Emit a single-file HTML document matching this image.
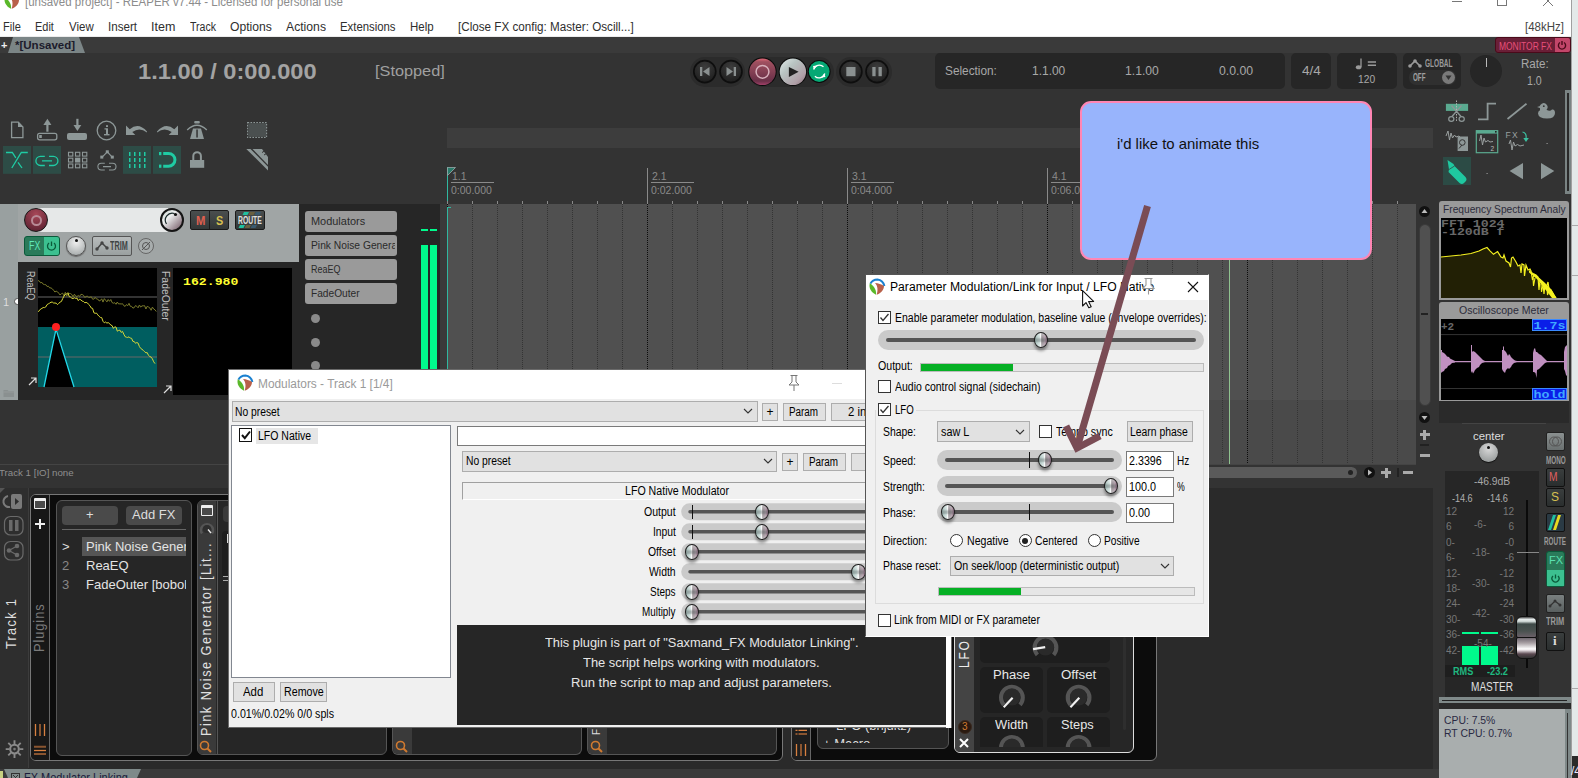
<!DOCTYPE html>
<html><head><meta charset="utf-8">
<style>
*{margin:0;padding:0;box-sizing:border-box}
html,body{width:1578px;height:778px;overflow:hidden;background:#333333;font-family:"Liberation Sans",sans-serif;position:relative}
.a{position:absolute}
.t{position:absolute;white-space:nowrap;line-height:1}
svg{position:absolute;overflow:visible}
.mb .t{font-size:12.5px;color:#2e2e2e;top:21px}
.ic{fill:#8d9797;stroke:none}
.grid{background-image:repeating-linear-gradient(to bottom,#2e2e2e 0 1px,transparent 1px 3px)}
.btnw{position:absolute;background:#e1e1e1;border:1px solid #adadad;font-size:12px;color:#000;text-align:center;line-height:16px}
.wtxt{font-size:12px;color:#000}
</style>
<style>
.thumb{position:absolute;width:14.5px;height:16px;border-radius:50%;border:1px solid #1e1e1e;background:linear-gradient(to bottom,rgba(255,255,255,.35) 0%,rgba(255,255,255,0) 30%,rgba(60,70,70,.3) 45%,rgba(60,70,70,.3) 58%,rgba(255,255,255,0) 70%,rgba(255,255,255,.3) 100%),linear-gradient(to right,#a8c0bc 0%,#d4e2e0 38%,#fafafa 47%,#f0f0f0 51%,#9a9498 55%,#b0a0aa 80%,#a07890 100%);box-shadow:0 3px 3px rgba(0,0,0,.38)}
.cb{position:absolute;width:13px;height:13px;background:#fff;border:1px solid #333}
.cb svg{position:absolute;left:-1px;top:-1px}
.rb{position:absolute;width:13px;height:13px;background:#fff;border:1px solid #333;border-radius:50%}
.wt{font-size:12px;color:#000}
</style>
</head><body>
<!-- right window edge -->
<div class="a" style="left:1571px;top:0;width:7px;height:778px;background:#e4e9e9"></div>
<div class="a" style="left:1571px;top:0;width:1px;height:778px;background:#a0a0a0"></div>

<!-- ===== title + menu ===== -->
<div class="a mb" style="left:0;top:0;width:1571px;height:36.5px;background:#fff">
  <svg style="left:4px;top:-7px" width="16" height="16" viewBox="0 0 16 16"><path d="M1.4 4.6 Q3.5 0.4 8.5 0.4 Q14 0.9 15.4 7" stroke="#1a80d0" stroke-width="2" fill="none"></path><path d="M0.8 4.3 C-0.6 9 2.5 13.6 7 15.8 C7.6 11 5 7 0.8 4.3Z" fill="#5ab82a"></path><path d="M6 4 C9 4.4 12.6 5 15 7 C15 11 11.5 14.6 7.6 15.8 C9 12 9 7 6 4Z" fill="#b8604a"></path></svg>
  <div class="t" style="left: 25px; top: -5px; font-size: 13px; color: rgb(140, 140, 140); --fw: 318px; transform-origin: 0px 50%; transform: scaleX(0.883333);">[unsaved project] - REAPER v7.44 - Licensed for personal use</div>
  <div class="t" style="left: 3px; --fw: 17.7px; transform-origin: 0px 50%; transform: scaleX(0.885);">File</div>
  <div class="t" style="left: 35px; --fw: 19.3px; transform-origin: 0px 50%; transform: scaleX(0.877273);">Edit</div>
  <div class="t" style="left: 69px; --fw: 24.8px; transform-origin: 0px 50%; transform: scaleX(0.918519);">View</div>
  <div class="t" style="left: 108px; --fw: 28.8px; transform-origin: 0px 50%; transform: scaleX(0.929032);">Insert</div>
  <div class="t" style="left: 151px; --fw: 24px; transform-origin: 0px 50%; transform: scaleX(1);">Item</div>
  <div class="t" style="left: 190px; --fw: 26.2px; transform-origin: 0px 50%; transform: scaleX(0.845161);">Track</div>
  <div class="t" style="left: 230px; --fw: 41.8px; transform-origin: 0px 50%; transform: scaleX(0.972093);">Options</div>
  <div class="t" style="left: 286px; --fw: 40px; transform-origin: 0px 50%; transform: scaleX(0.97561);">Actions</div>
  <div class="t" style="left: 340px; --fw: 55.4px; transform-origin: 0px 50%; transform: scaleX(0.908197);">Extensions</div>
  <div class="t" style="left: 410px; --fw: 23.9px; transform-origin: 0px 50%; transform: scaleX(0.919231);">Help</div>
  <div class="t" style="left: 458px; --fw: 175.4px; transform-origin: 0px 50%; transform: scaleX(0.932979);">[Close FX config: Master: Oscill...]</div>
  <div class="t" style="left: 1524.5px; color: rgb(68, 68, 68); --fw: 38.5px; transform-origin: 0px 50%; transform: scaleX(0.916667);">[48kHz]</div>
  <div class="a" style="left:1452px;top:1px;width:10px;height:1px;background:#777"></div>
  <div class="a" style="left:1497px;top:-3px;width:10px;height:9px;border:1px solid #777"></div>
  <svg style="left:1542px;top:-5px" width="12" height="12"><path d="M1 11 L11 1 M1 1 L11 11" stroke="#777" stroke-width="1" fill="none"></path></svg>
</div>
<div class="a" style="left:0;top:36px;width:1571px;height:1px;background:#ececec"></div>

<!-- ===== tab row ===== -->
<div class="a" style="left:0;top:37px;width:1571px;height:16px;background:#3a3a3a"></div>
<div class="t" style="left:1px;top:40px;font-size:11px;color:#eee;font-weight:bold">+</div>
<svg style="left:8px;top:37px" width="80" height="16"><path d="M5 0 L71 0 L77 16 L0 16Z" fill="#7b8586"></path></svg>
<div class="t" style="left:15px;top:40px;font-size:11.5px;color:#1b1b2b;font-weight:bold">*[Unsaved]</div>
<!-- Monitor FX -->
<div class="a" style="left:1495px;top:37px;width:76px;height:16px;background:#6a1f37;border:1px solid #4a0a1a;border-radius:3px"></div>
<div class="a" style="left:1555px;top:38px;width:15px;height:14px;background:#c2466a;border-radius:0 2px 2px 0"></div>
<div class="t" style="left: 1499px; top: 40.5px; font-size: 11px; color: rgb(232, 80, 122); --fw: 53px; transform-origin: 0px 50%; transform: scaleX(0.768116);">MONITOR FX</div>
<svg style="left:1557px;top:40px" width="10" height="10"><path d="M3 2.5 A3.6 3.6 0 1 0 7 2.5" stroke="#4a0a1a" stroke-width="1.4" fill="none"></path><path d="M5 1 L5 5" stroke="#4a0a1a" stroke-width="1.4"></path></svg>

<!-- ===== transport ===== -->
<div class="t" style="left: 137.5px; top: 62px; font-size: 21.5px; font-weight: bold; color: rgb(163, 163, 163); --fw: 179px; transform-origin: 0px 50%; transform: scaleX(1.09816);">1.1.00 / 0:00.000</div>
<div class="t" style="left: 375px; top: 63px; font-size: 15.5px; color: rgb(160, 160, 160); --fw: 69.4px; transform-origin: 0px 50%; transform: scaleX(1.05152);">[Stopped]</div>
<div class="a" style="left:690px;top:57px;width:55px;height:30px;background:#2b2b2b;border-radius:15px"></div>
<div class="a" style="left:748px;top:57px;width:86px;height:30px;background:#2b2b2b;border-radius:15px"></div>
<div class="a" style="left:836px;top:57px;width:56px;height:30px;background:#2b2b2b;border-radius:15px"></div>
<svg style="left:680px;top:50px" width="220" height="45">
 <defs>
  <radialGradient id="gdk" cx="50%" cy="30%" r="70%"><stop offset="0" stop-color="#3c3c3c"></stop><stop offset="1" stop-color="#1e1e1e"></stop></radialGradient>
  <linearGradient id="grec" x1="0" y1="0" x2="0" y2="1"><stop offset="0" stop-color="#e06878"></stop><stop offset=".12" stop-color="#a05060"></stop><stop offset=".85" stop-color="#6a3048"></stop><stop offset="1" stop-color="#a04068"></stop></linearGradient>
  <linearGradient id="gply" x1="0" y1="0" x2="1" y2="1"><stop offset="0" stop-color="#e4ecec"></stop><stop offset=".35" stop-color="#b8c4c2"></stop><stop offset=".75" stop-color="#b0a0a8"></stop><stop offset="1" stop-color="#8a7078"></stop></linearGradient>
 </defs>
 <g stroke="#0e0e0e" stroke-width="1.6">
  <circle cx="24.8" cy="21.6" r="11" fill="url(#gdk)"></circle>
  <circle cx="51" cy="21.6" r="11" fill="url(#gdk)"></circle>
  <circle cx="170.9" cy="21.6" r="11" fill="url(#gdk)"></circle>
  <circle cx="197" cy="21.6" r="11" fill="url(#gdk)"></circle>
 </g>
 <path d="M20 17 H22.3 V26 H20Z M29.5 17 L23 21.5 L29.5 26Z" fill="#8a9090"></path>
 <path d="M56 17 H53.7 V26 H56Z M46.5 17 L53 21.5 L46.5 26Z" fill="#8a9090"></path>
 <rect x="166.3" y="17" width="9.2" height="9.2" fill="#8a9090"></rect>
 <rect x="192.3" y="17" width="3.3" height="9.2" fill="#8a9090"></rect><rect x="198.5" y="17" width="3.3" height="9.2" fill="#8a9090"></rect>
 <circle cx="82.5" cy="21.8" r="14.2" fill="#0a0a0a"></circle>
 <circle cx="82.5" cy="21.8" r="13.2" fill="url(#grec)"></circle>
 <circle cx="82.5" cy="21.8" r="6.4" fill="none" stroke="#d8b0bc" stroke-width="1.5"></circle>
 <circle cx="112.9" cy="21.8" r="14.2" fill="#0a0a0a"></circle>
 <circle cx="112.9" cy="21.8" r="13.2" fill="url(#gply)"></circle>
 <path d="M108.9 17 L118.6 21.8 L108.9 27Z" fill="#222"></path>
 <circle cx="139.2" cy="21.5" r="11.4" fill="#0a0a0a"></circle>
 <circle cx="139.2" cy="21.5" r="10.4" fill="#05a874"></circle>
 <path d="M133.6 19.5 A6 6 0 0 1 143.5 16.8 M144.8 23.5 A6 6 0 0 1 134.9 26.2" stroke="#fff" stroke-width="1.3" fill="none"></path>
 <path d="M133 16 L137.5 15.5 L134 19.5Z M145.4 27 L140.9 27.5 L144.4 23.5Z" fill="#fff"></path>
</svg>
<!-- selection etc -->
<div class="a" style="left:935px;top:53px;width:350px;height:36px;background:#262626;border-radius:5px"></div>
<div class="t" style="left: 945px; top: 65px; font-size: 12.5px; color: rgb(168, 168, 168); --fw: 52px; transform-origin: 0px 50%; transform: scaleX(0.945455);">Selection:</div>
<div class="t" style="left: 1032.4px; top: 65px; font-size: 12.5px; color: rgb(168, 168, 168); --fw: 33.5px; transform-origin: 0px 50%; transform: scaleX(0.957143);">1.1.00</div>
<div class="t" style="left: 1125.1px; top: 65px; font-size: 12.5px; color: rgb(168, 168, 168); --fw: 34px; transform-origin: 0px 50%; transform: scaleX(0.971429);">1.1.00</div>
<div class="t" style="left: 1219px; top: 65px; font-size: 12.5px; color: rgb(168, 168, 168); --fw: 34.3px; transform-origin: 0px 50%; transform: scaleX(0.98);">0.0.00</div>
<div class="a" style="left:1291px;top:53px;width:40px;height:36px;background:#262626;border-radius:5px"></div>
<div class="t" style="left: 1301.5px; top: 65px; font-size: 12.5px; color: rgb(168, 168, 168); --fw: 18.4px; transform-origin: 0px 50%; transform: scaleX(1.08235);">4/4</div>
<div class="a" style="left:1337px;top:53px;width:60px;height:36px;background:#262626;border-radius:5px"></div>
<svg style="left:1355px;top:57px" width="28" height="14"><path d="M6 1.5 V10" stroke="#9a9a9a" stroke-width="1.3"></path><ellipse cx="3.6" cy="10.2" rx="2.8" ry="2" fill="#9a9a9a"></ellipse><path d="M12.8 5 H21 M12.8 8.3 H21" stroke="#9a9a9a" stroke-width="1.4"></path></svg>
<div class="t" style="left: 1358.4px; top: 73.5px; font-size: 10.5px; color: rgb(168, 168, 168); --fw: 17.6px; transform-origin: 0px 50%; transform: scaleX(0.977778);">120</div>
<div class="a" style="left:1403px;top:53px;width:58px;height:36px;background:#262626;border-radius:5px"></div>
<svg style="left:1408px;top:58px" width="14" height="11"><path d="M2 8 L7 3 L12 8" stroke="#9a9a9a" stroke-width="1.6" fill="none"></path><circle cx="2" cy="8" r="1.8" fill="#9a9a9a"></circle><circle cx="7" cy="3" r="1.8" fill="#9a9a9a"></circle><circle cx="12" cy="8" r="1.8" fill="#9a9a9a"></circle></svg>
<div class="t" style="left: 1424.6px; top: 58.5px; font-size: 10px; font-weight: bold; color: rgb(154, 154, 154); --fw: 27.4px; transform-origin: 0px 50%; transform: scaleX(0.652381);">GLOBAL</div>
<div class="a" style="left:1409px;top:70px;width:47px;height:14.5px;background:#303030;border-radius:7px"></div>
<div class="t" style="left: 1413.4px; top: 72.2px; font-size: 10.5px; font-weight: bold; color: rgb(160, 160, 160); --fw: 12.5px; transform-origin: 0px 50%; transform: scaleX(0.595238);">OFF</div>
<div class="a" style="left:1442.3px;top:70.8px;width:13px;height:13px;border-radius:50%;background:#7a7a7a"></div>
<svg style="left:1442.3px;top:70.8px" width="13" height="13"><path d="M3.5 4.5 L9.5 4.5 L6.5 9Z" fill="#333"></path></svg>
<div class="a" style="left:1470px;top:55px;width:32px;height:32px;border-radius:50%;background:#262626"></div>
<div class="a" style="left:1486px;top:58px;width:1px;height:9px;background:#bbb"></div>
<div class="t" style="left: 1521px; top: 58px; font-size: 12px; color: rgb(168, 168, 168); --fw: 28px; transform-origin: 0px 50%; transform: scaleX(0.965517);">Rate:</div>
<div class="t" style="left: 1527px; top: 74.5px; font-size: 12px; color: rgb(168, 168, 168); --fw: 15px; transform-origin: 0px 50%; transform: scaleX(0.882353);">1.0</div>

<!-- ===== toolbar icons ===== -->
<svg style="left:0;top:0" width="280" height="180">
 <g fill="none" stroke="#8d9797" stroke-width="1.3">
  <path d="M11.6 122.1 H18.3 L22.9 127 V137.6 H11.6Z"></path>
  <rect x="37.6" y="133.4" width="19.2" height="6.4" rx="2"></rect>
  <circle cx="106.5" cy="130.5" r="9.3"></circle>
  <rect x="247.6" y="122.6" width="19" height="14.8" stroke-dasharray="1.6 1.3" stroke-width="1.1"></rect>
 </g>
 <g fill="#8d9797">
  <path d="M18 122 L23 127 H18Z"></path>
  <rect x="46.3" y="123.5" width="2.2" height="8.2"></rect><path d="M43.4 125 L47.4 118.7 L51.4 125Z"></path>
  <rect x="39.2" y="135" width="2.6" height="3"></rect>
  <rect x="76.3" y="118.8" width="2.2" height="8"></rect><path d="M73.5 125 L77.4 131 L81.3 125Z"></path>
  <rect x="67" y="133" width="20" height="7" rx="2"></rect>
  <rect x="106" y="128.3" width="2" height="6.2"></rect><rect x="104" y="134" width="5.5" height="1.4"></rect><rect x="104.5" y="128.3" width="2" height="1.2"></rect><rect x="106" y="125.2" width="2" height="1.8"></rect>
  <path d="M126 125.6 V135.1 H135.3 L132.3 132.1 Q139.5 126.8 146.9 132.4 L147 131.6 Q138.5 121.8 129.7 129.3Z"></path>
  <path d="M178 125.6 V135.1 H168.7 L171.7 132.1 Q164.5 126.8 157.1 132.4 L157 131.6 Q165.5 121.8 174.3 129.3Z"></path>
  <path d="M190 139.1 L193 128.5 H201 L204 139.1Z"></path>
  <rect x="194.2" y="121" width="5.6" height="2.6" rx="1"></rect>
 </g>
 <rect x="196.3" y="129.5" width="1.5" height="8" fill="#333"></rect>
 <path d="M187.2 130 Q197 120.5 206.8 130" stroke="#8d9797" stroke-width="1.3" fill="none"></path>
 <rect x="248.2" y="123.2" width="17.8" height="13.6" fill="#4b5050"></rect>
 <!-- row 2 -->
 <rect x="3" y="146" width="28" height="27.8" fill="#2d4c46"></rect>
 <rect x="33" y="146" width="28" height="27.8" fill="#2d4c46"></rect>
 <rect x="123" y="146" width="28" height="27.8" fill="#2d4c46"></rect>
 <rect x="153" y="146" width="28" height="27.8" fill="#2d4c46"></rect>
 <g fill="none" stroke="#1fcca4" stroke-width="1.3">
  <path d="M6 152.5 H12.3 L15.8 157.8 M27.8 152.5 H21.3 L11.8 168 M18 162.3 L22 168"></path>
  <path d="M44.8 156.3 H40.5 A4.6 4.6 0 0 0 40.5 165.5 H44.8 M49 156.3 H53.3 A4.6 4.6 0 0 1 53.3 165.5 H49 M42 160.9 H52"></path>
 </g>
 <g fill="#1fcca4">
  <rect x="129" y="152" width="1.5" height="4"></rect><rect x="134" y="152" width="1.5" height="4"></rect><rect x="139" y="152" width="1.5" height="4"></rect><rect x="144" y="152" width="1.5" height="4"></rect>
  <rect x="129" y="158" width="1.5" height="4"></rect><rect x="134" y="158" width="1.5" height="4"></rect><rect x="139" y="158" width="1.5" height="4"></rect><rect x="144" y="158" width="1.5" height="4"></rect>
  <rect x="129" y="164" width="1.5" height="4"></rect><rect x="134" y="164" width="1.5" height="4"></rect><rect x="139" y="164" width="1.5" height="4"></rect><rect x="144" y="164" width="1.5" height="4"></rect>
  <rect x="159" y="152" width="2.4" height="3.2"></rect><rect x="159" y="164.6" width="2.4" height="3.2"></rect>
 </g>
 <path d="M163.2 153.4 H168.5 A6.45 6.45 0 0 1 168.5 166.3 H163.2" stroke="#1fcca4" stroke-width="3" fill="none"></path>
 <g fill="none" stroke="#8d9797" stroke-width="1.1">
  <rect x="68.5" y="152.3" width="4.3" height="3.8"></rect><rect x="75.5" y="152.3" width="4.3" height="3.8"></rect><rect x="82.5" y="152.3" width="4.3" height="3.8"></rect>
  <rect x="68.5" y="158.2" width="4.3" height="3.8"></rect><rect x="82.5" y="158.2" width="4.3" height="3.8"></rect>
  <rect x="68.5" y="164" width="4.3" height="3.8"></rect><rect x="75.5" y="164" width="4.3" height="3.8"></rect><rect x="82.5" y="164" width="4.3" height="3.8"></rect>
  <path d="M102.2 157.2 L107.3 151.8 L112.2 157.2"></path>
  <path d="M104.8 163.2 H101.3 A3.4 3.4 0 0 0 101.3 170 H104.8 M109 163.2 H112.6 A3.4 3.4 0 0 1 112.6 170 H109 M103 166.6 H111"></path>
 </g>
 <rect x="75" y="157.7" width="5.3" height="4.8" fill="#8d9797"></rect>
 <g fill="#8d9797"><rect x="100.3" y="155.6" width="3" height="3"></rect><rect x="105.8" y="150.3" width="3" height="3"></rect><rect x="110.8" y="155.6" width="3" height="3"></rect>
  <rect x="190" y="160" width="14.2" height="7.8"></rect></g>
 <path d="M193.3 160.5 V156 A3.8 3.8 0 0 1 200.9 156 V160.5" stroke="#8d9797" stroke-width="2" fill="none"></path>
 <path d="M246.3 149 H262 L268 157 V170.4Z" fill="#8d9797"></path>
 <path d="M250.5 149 L268 166.8 V165 L252.5 149Z" fill="#333"></path>
 <path d="M262 152.5 L264.5 151 M264 155 L266.5 153.5" stroke="#333" stroke-width="1"></path>
</svg>

<!-- ===== timeline ===== -->
<div class="a" style="left:447px;top:128px;width:986px;height:20px;background:#3d3d3d"></div>
<!-- ruler markers -->
<div class="a" style="left:447px;top:167px;width:1.4px;height:37px;background:#30b8a0"></div>
<svg style="left:447px;top:167px" width="12" height="12"><path d="M0.5 0.5 H8.5 L0.5 8.5Z" fill="#2a7a6a" stroke="#9aa" stroke-width="0.8"></path></svg>
<div class="t" style="left:452px;top:171px;font-size:10.5px;color:#8a8a8a">1.1</div>
<div class="a" style="left:451px;top:182px;width:43px;height:1px;background:#8a8a8a"></div>
<div class="t" style="left:451px;top:185px;font-size:10.5px;color:#8a8a8a">0:00.000</div>
<div class="a" style="left:647px;top:168px;width:1px;height:36px;background:#8a8a8a"></div>
<div class="t" style="left:652px;top:171px;font-size:10.5px;color:#8a8a8a">2.1</div>
<div class="a" style="left:651px;top:182px;width:43px;height:1px;background:#8a8a8a"></div>
<div class="t" style="left:651px;top:185px;font-size:10.5px;color:#8a8a8a">0:02.000</div>
<div class="a" style="left:847px;top:168px;width:1px;height:36px;background:#8a8a8a"></div>
<div class="t" style="left:852px;top:171px;font-size:10.5px;color:#8a8a8a">3.1</div>
<div class="a" style="left:851px;top:182px;width:43px;height:1px;background:#8a8a8a"></div>
<div class="t" style="left:851px;top:185px;font-size:10.5px;color:#8a8a8a">0:04.000</div>
<div class="a" style="left:1047px;top:168px;width:1px;height:36px;background:#8a8a8a"></div>
<div class="t" style="left:1052px;top:171px;font-size:10.5px;color:#8a8a8a">4.1</div>
<div class="a" style="left:1051px;top:182px;width:43px;height:1px;background:#8a8a8a"></div>
<div class="t" style="left:1051px;top:185px;font-size:10.5px;color:#8a8a8a">0:06.000</div>
<!-- track lane -->
<div class="a" style="left:440px;top:204px;width:7px;height:260px;background:#3a3a3a"></div>
<svg style="left:447px;top:200px" width="969" height="264">
 <defs>
  <pattern id="pmin" x="0" y="0" width="25" height="2" patternUnits="userSpaceOnUse"><rect x="0" y="0" width="1" height="1" fill="#343434"></rect></pattern>
  <pattern id="pmaj" x="0" y="0" width="200" height="2" patternUnits="userSpaceOnUse"><rect x="0" y="0" width="1" height="1" fill="#0c0c0c"></rect></pattern>
  <pattern id="ptk" x="0" y="0" width="25" height="4" patternUnits="userSpaceOnUse"><rect x="0" y="1" width="1" height="3" fill="#8a8a8a"></rect></pattern>
 </defs>
 <rect x="0" y="0" width="969" height="4" fill="url(#ptk)"></rect>
 <rect x="0" y="4" width="969" height="196" fill="#505050"></rect>
 <rect x="0" y="200" width="969" height="64" fill="#4a4a4a"></rect>
 <rect x="0" y="4" width="969" height="260" fill="url(#pmin)"></rect>
 <rect x="0" y="4" width="969" height="260" fill="url(#pmaj)"></rect>
</svg>
<div class="a" style="left:447px;top:207px;width:1.4px;height:257px;background:#30b8a0"></div>
<div class="a" style="left:447px;top:207px;width:4px;height:1.4px;background:#30b8a0"></div>
<div class="a" style="left:1229px;top:204px;width:1px;height:260px;background:#8fc28f"></div>
<!-- v scrollbar -->
<div class="a" style="left:1416px;top:204px;width:17px;height:260px;background:#333"></div>
<div class="a" style="left:1419px;top:206.3px;width:11px;height:11px;border-radius:50%;background:#111"></div>
<svg style="left:1419px;top:206.3px" width="11" height="11"><path d="M2.5 7 L8.5 7 L5.5 3Z" fill="#bbb"></path></svg>
<div class="a" style="left:1418.5px;top:224px;width:12px;height:181.5px;background:#505050;border:1px solid #3a3a3a;border-radius:6px"></div>
<div class="a" style="left:1421px;top:313px;width:7px;height:2px;background:#222"></div>
<div class="a" style="left:1419px;top:412px;width:11px;height:11px;border-radius:50%;background:#111"></div>
<svg style="left:1419px;top:412px" width="11" height="11"><path d="M2.5 4 L8.5 4 L5.5 8Z" fill="#bbb"></path></svg>
<div class="a" style="left:1419.5px;top:433px;width:10px;height:3px;background:#aaa"></div><div class="a" style="left:1423px;top:429.5px;width:3px;height:10px;background:#aaa"></div>
<div class="a" style="left:1420px;top:444px;width:9px;height:1.5px;background:#222"></div>
<div class="a" style="left:1420px;top:453.5px;width:9.5px;height:3px;background:#aaa"></div>
<!-- h scrollbar -->
<div class="a" style="left:447px;top:467px;width:910px;height:11px;background:#5a5a5a;border-radius:6px"></div>
<div class="a" style="left:1348px;top:470px;width:5px;height:5px;border-radius:50%;background:#222"></div>
<div class="a" style="left:1364px;top:467px;width:11px;height:11px;border-radius:50%;background:#111"></div>
<svg style="left:1364px;top:467px" width="11" height="11"><path d="M4 2.5 L8 5.5 L4 8.5Z" fill="#bbb"></path></svg>
<div class="a" style="left:1381px;top:471px;width:10px;height:3px;background:#aaa"></div><div class="a" style="left:1384.5px;top:467.5px;width:3px;height:10px;background:#aaa"></div>
<div class="a" style="left:1397px;top:468px;width:1.5px;height:9px;background:#222"></div>
<div class="a" style="left:1403px;top:471px;width:9.5px;height:3px;background:#aaa"></div>

<!-- ===== track header ===== -->
<div class="a" style="left:0;top:204px;width:18px;height:196px;background:#99a0a0"></div>
<div class="t" style="left:3px;top:297px;font-size:11px;color:#ddd">1</div>
<div class="a" style="left:14px;top:298px;width:7px;height:7px;border-radius:50%;background:#fff;border:1px solid #555"></div>
<svg style="left:3px;top:388px" width="12" height="10"><path d="M0.5 2 H4.5 L5.5 3 H11 V9 H0.5Z" fill="#8a9090"></path><path d="M0.5 4 H11" stroke="#9aa0a0" stroke-width="0.8"></path></svg>
<div class="a" style="left:18px;top:204px;width:281px;height:58px;background:#a0a5a5"></div>
<div class="a" style="left:38px;top:208px;width:130px;height:24px;background:#e6e8e8"></div>
<div class="a" style="left:24px;top:208px;width:24px;height:24px;border-radius:50%;background:radial-gradient(circle at 50% 25%,#a84858,#5e2232 85%);border:1.5px solid #1a1a1a"></div>
<div class="a" style="left:30.5px;top:214.5px;width:11px;height:11px;border-radius:50%;border:2px solid #b88a96"></div>
<div class="a" style="left:160px;top:208px;width:24px;height:24px;border-radius:50%;background:linear-gradient(135deg,#c8d4d0 0%,#eef0f0 35%,#a09098 75%,#705860 100%);border:2px solid #151515"></div>
<svg style="left:160px;top:208px" width="24" height="24"><path d="M6.5 16 A7 7 0 0 1 14.5 5.5" stroke="#1a2a2a" stroke-width="1.2" fill="none"></path><circle cx="15.5" cy="6.5" r="1.6" fill="#111"></circle></svg>
<div class="a" style="left:190px;top:210px;width:39px;height:20px;background:linear-gradient(#4a4e4e,#333838);border:1px solid #1a1a1a;border-radius:2px"></div>
<div class="a" style="left:209px;top:210px;width:1px;height:20px;background:#1a1a1a"></div>
<div class="t" style="left: 195.5px; top: 213.5px; font-size: 13px; font-weight: bold; color: rgb(224, 96, 80); --fw: 9.5px; transform-origin: 0px 50%; transform: scaleX(0.863636);">M</div>
<div class="t" style="left: 215.5px; top: 213.5px; font-size: 13px; font-weight: bold; color: rgb(216, 192, 80); --fw: 7.5px; transform-origin: 0px 50%; transform: scaleX(0.833333);">S</div>
<div class="a" style="left:235px;top:210px;width:30px;height:20px;background:linear-gradient(#4a4e4e,#333838);border:1px solid #1a1a1a;border-radius:2px"></div>
<svg style="left:235px;top:210px" width="30" height="20"><path d="M9 2 H14 L12.5 5 H7.5Z" fill="#20c0a0"></path><path d="M15 2 H20 L18.5 5 H13.5Z" fill="#6a6040"></path><path d="M21 2 H26 L24.5 5 H19.5Z" fill="#3a5a70"></path><path d="M5 15 H10 L8.5 18 H3.5Z" fill="#20c0a0"></path><path d="M11 15 H16 L14.5 18 H9.5Z" fill="#6a6040"></path><path d="M17 15 H22 L20.5 18 H15.5Z" fill="#3a5a70"></path></svg>
<div class="t" style="left: 238px; top: 214.5px; font-size: 11px; font-weight: bold; color: rgb(224, 224, 224); --fw: 24px; transform-origin: 0px 50%; transform: scaleX(0.615385);">ROUTE</div>
<!-- row 2 -->
<div class="a" style="left:24px;top:236px;width:36px;height:20px;background:#2a7a5a;border:1px solid #0a5a3a;border-radius:3px"></div>
<div class="a" style="left:44px;top:237px;width:15px;height:18px;background:#3cc090;border-radius:0 2px 2px 0"></div>
<div class="t" style="left: 28.5px; top: 240px; font-size: 12px; color: rgb(96, 232, 184); --fw: 11px; transform-origin: 0px 50%; transform: scaleX(0.733333);">FX</div>
<svg style="left:44px;top:237px" width="15" height="18"><path d="M5 6 A4 4 0 1 0 10 6" stroke="#0a5a3a" stroke-width="1.3" fill="none"></path><path d="M7.5 4.5 V9" stroke="#0a5a3a" stroke-width="1.3"></path></svg>
<div class="a" style="left:66px;top:236px;width:20px;height:20px;border-radius:50%;background:radial-gradient(circle at 50% 30%,#f0f0f0,#9aa0a0);border:1px solid #555;box-shadow:0 1px 1px #666"></div>
<div class="a" style="left:75px;top:239px;width:3px;height:3px;border-radius:50%;background:#111"></div>
<div class="a" style="left:92px;top:236px;width:40px;height:20px;background:linear-gradient(#b8bcbc,#9aa0a0);border:1px solid #555;border-radius:2px"></div>
<svg style="left:95px;top:240px" width="16" height="12"><path d="M2 9 L7 3 L12 8" stroke="#444" stroke-width="1.5" fill="none"></path><circle cx="2" cy="9" r="1.7" fill="#444"></circle><circle cx="7" cy="3" r="1.7" fill="#444"></circle><circle cx="12" cy="8" r="1.7" fill="#444"></circle></svg>
<div class="t" style="left: 109.5px; top: 240px; font-size: 12px; font-weight: bold; color: rgb(64, 68, 68); --fw: 17.5px; transform-origin: 0px 50%; transform: scaleX(0.603448);">TRIM</div>
<div class="a" style="left:138px;top:238px;width:16px;height:16px;border-radius:50%;border:1px solid #666;background:#a8adad"></div>
<svg style="left:138px;top:238px" width="16" height="16"><circle cx="8" cy="8" r="3.5" stroke="#555" stroke-width="1" fill="none"></circle><path d="M4 12 L12 4" stroke="#555" stroke-width="1"></path></svg>
<!-- fx displays -->
<div class="a" style="left:18px;top:262px;width:281px;height:138px;background:#262626"></div>
<div class="t" style="left: 36px; top: 271px; font-size: 11.5px; color: rgb(192, 192, 192); transform: rotate(90deg) scaleX(0.776316); transform-origin: 0px 0px; --rt: rotate(90deg); --fw: 29.5px;">ReaEQ</div>
<div class="a" style="left:38px;top:268px;width:119px;height:119px;background:#000"></div>
<svg style="left:38px;top:268px" width="119" height="119" viewBox="0 0 119 119">
 <rect x="0" y="59" width="119" height="60" fill="#005e60"></rect>
 <path d="M0 29 H119 M0 89 H119" stroke="#666" stroke-width="1"></path>
 <path d="M6 119 L18 59 L36 119Z" fill="#000"></path>
 <path d="M6 119 L18 61 L36 119" stroke="#22d8e8" stroke-width="1.3" fill="none"></path>
 <circle cx="18" cy="59" r="4" fill="#ff2020"></circle>
 <path d="M0.0 12.6 L1.3 13.0 L2.6 14.9 L3.9 14.4 L5.2 16.2 L6.5 16.6 L7.8 16.7 L9.1 18.5 L10.4 18.2 L11.7 19.9 L13.0 19.9 L14.3 20.8 L15.6 22.3 L16.9 24.0 L18.2 23.2 L19.5 23.8 L20.8 25.3 L22.1 27.0 L23.4 25.7 L24.7 25.2 L26.0 28.1 L27.3 24.3 L28.6 28.2 L29.9 26.0 L31.2 25.6 L32.5 25.6 L33.8 26.5 L35.1 28.9 L36.4 26.2 L37.7 28.1 L39.0 28.5 L40.3 27.5 L41.6 28.4 L42.9 26.4 L44.2 26.5 L45.5 27.3 L46.8 29.5 L48.1 28.5 L49.4 28.1 L50.7 29.5 L52.0 29.2 L53.3 28.8 L54.6 31.2 L55.9 31.1 L57.2 29.3 L58.5 31.0 L59.8 31.1 L61.1 32.9 L62.4 32.5 L63.7 30.8 L65.0 34.1 L66.3 30.6 L67.6 32.2 L68.9 33.9 L70.2 31.5 L71.5 33.3 L72.8 31.5 L74.1 34.6 L75.4 35.2 L76.7 34.7 L78.0 36.3 L79.3 34.0 L80.6 36.0 L81.9 35.8 L83.2 36.0 L84.5 35.7 L85.8 37.7 L87.1 38.4 L88.4 36.6 L89.7 37.7 L91.0 35.3 L92.3 38.3 L93.6 38.4 L94.9 40.1 L96.2 39.7 L97.5 37.6 L98.8 38.3 L100.1 39.8 L101.4 37.0 L102.7 39.1 L104.0 37.9 L105.3 37.8 L106.6 37.7 L107.9 41.0 L109.2 38.3 L110.5 39.0 L111.8 39.9 L113.1 42.3 L114.4 39.1 L115.7 41.0 L117.0 41.8 L118.3 43.5" stroke="#7a7a2c" stroke-width="1" fill="none"></path>
 <path d="M0.0 43.6 L1.3 42.8 L2.6 41.0 L3.9 40.4 L5.2 39.5 L6.5 39.6 L7.8 38.9 L9.1 36.6 L10.4 35.8 L11.7 35.1 L13.0 34.2 L14.3 34.1 L15.6 35.0 L16.9 35.0 L18.2 35.2 L19.5 36.6 L20.8 35.3 L22.1 34.1 L23.4 33.5 L24.7 30.6 L26.0 28.1 L27.3 26.5 L28.6 26.0 L29.9 24.7 L31.2 28.6 L32.5 29.0 L33.8 30.2 L35.1 30.6 L36.4 29.8 L37.7 30.5 L39.0 30.1 L40.3 32.6 L41.6 31.2 L42.9 31.9 L44.2 33.1 L45.5 33.5 L46.8 34.8 L48.1 34.4 L49.4 34.9 L50.7 36.5 L52.0 37.8 L53.3 40.1 L54.6 40.4 L55.9 44.8 L57.2 45.3 L58.5 45.1 L59.8 46.9 L61.1 48.3 L62.4 49.4 L63.7 49.6 L65.0 53.3 L66.3 54.8 L67.6 54.0 L68.9 55.1 L70.2 54.6 L71.5 55.5 L72.8 57.1 L74.1 57.6 L75.4 60.4 L76.7 58.8 L78.0 59.1 L79.3 63.2 L80.6 62.5 L81.9 62.1 L83.2 64.4 L84.5 63.4 L85.8 66.2 L87.1 68.7 L88.4 69.2 L89.7 69.5 L91.0 68.8 L92.3 70.1 L93.6 70.3 L94.9 73.4 L96.2 73.5 L97.5 75.3 L98.8 74.5 L100.1 75.1 L101.4 78.5 L102.7 80.4 L104.0 81.3 L105.3 82.4 L106.6 83.7 L107.9 84.8 L109.2 84.6 L110.5 87.4 L111.8 88.5 L113.1 89.1 L114.4 90.9 L115.7 93.8 L117.0 95.6" stroke="#d8d838" stroke-width="1" fill="none"></path>
</svg>
<svg style="left:27.5px;top:375.5px" width="10" height="10"><path d="M1 9 L8 2 M3 2 H8 V7" stroke="#ddd" stroke-width="1.2" fill="none"></path></svg>
<div class="t" style="left: 171px; top: 271px; font-size: 11.5px; color: rgb(192, 192, 192); transform: rotate(90deg) scaleX(0.903636); transform-origin: 0px 0px; --rt: rotate(90deg); --fw: 49.7px;">FadeOuter</div>
<div class="a" style="left:173px;top:268px;width:119px;height:127px;background:#000"></div>
<div class="t" style="left: 183px; top: 276px; font-size: 11.5px; font-family: &quot;Liberation Mono&quot;, monospace; font-weight: bold; color: rgb(255, 255, 48); --fw: 55px; transform-origin: 0px 50%; transform: scaleX(1.14583);">162.980</div>
<svg style="left:163px;top:384px" width="10" height="10"><path d="M1 9 L8 2 M3 2 H8 V7" stroke="#ddd" stroke-width="1.2" fill="none"></path></svg>
<!-- fx buttons -->
<div class="a" style="left:299px;top:204px;width:141px;height:196px;background:#262626"></div>
<div class="a" style="left:305px;top:211px;width:92px;height:21px;background:#9a9a9a;border-radius:3px"></div>
<div class="a" style="left:305px;top:235px;width:92px;height:21px;background:#9a9a9a;border-radius:3px"></div>
<div class="a" style="left:305px;top:259px;width:92px;height:21px;background:#9a9a9a;border-radius:3px"></div>
<div class="a" style="left:305px;top:283px;width:92px;height:21px;background:#9a9a9a;border-radius:3px"></div>
<div class="t" style="left: 310.7px; top: 215.5px; font-size: 11px; color: rgb(42, 42, 42); --fw: 53.7px; transform-origin: 0px 50%; transform: scaleX(0.994444);">Modulators</div>
<div class="a" style="left:310.7px;top:239px;width:84px;height:14px;overflow:hidden"><div class="t" style="left: 0px; top: 0.8px; font-size: 11px; color: rgb(42, 42, 42); --fw: 98px; transform-origin: 0px 50%; transform: scaleX(0.933333);">Pink Noise Generator</div></div>
<div class="t" style="left: 310.7px; top: 263.8px; font-size: 11px; color: rgb(42, 42, 42); --fw: 29.4px; transform-origin: 0px 50%; transform: scaleX(0.816667);">ReaEQ</div>
<div class="t" style="left: 310.7px; top: 287.7px; font-size: 11px; color: rgb(42, 42, 42); --fw: 49px; transform-origin: 0px 50%; transform: scaleX(0.924528);">FadeOuter</div>
<div class="a" style="left:311px;top:314px;width:9px;height:9px;border-radius:50%;background:#8a8a8a"></div>
<div class="a" style="left:311px;top:338px;width:9px;height:9px;border-radius:50%;background:#8a8a8a"></div>
<div class="a" style="left:311px;top:361px;width:9px;height:9px;border-radius:50%;background:#8a8a8a"></div>
<!-- meter -->
<div class="a" style="left:421px;top:229px;width:7px;height:2px;background:#00fa8c"></div>
<div class="a" style="left:430px;top:229px;width:7px;height:2px;background:#00fa8c"></div>
<div class="a" style="left:421px;top:245px;width:7px;height:155px;background:#00fa8c"></div>
<div class="a" style="left:430px;top:245px;width:7px;height:155px;background:#00fa8c"></div>

<!-- lower dark -->
<div class="a" style="left:0;top:464px;width:1416px;height:1px;background:#444"></div>
<div class="t" style="left: -1px; top: 467.8px; font-size: 9.5px; color: rgb(143, 143, 143); --fw: 74.6px; transform-origin: 0px 50%; transform: scaleX(1.02192);">Track 1 [IO] none</div>

<!-- ===== mixer ===== -->
<div class="a" style="left:0;top:488px;width:1434px;height:281px;background:#2a2a2a"></div>
<div class="a" style="left:0;top:488px;width:28px;height:281px;background:#2e2e2e"></div>
<div class="a" style="left:28px;top:488px;width:1px;height:280px;background:#3c3c3c"></div>
<svg style="left:0;top:488px" width="28" height="275">
 <path d="M0 0 L5 0 L0 5Z" fill="#555"></path>
 <rect x="11" y="6" width="11" height="15" rx="2" fill="#7a7a7a"></rect><path d="M15 10 L19 13.5 L15 17Z" fill="#2e2e2e"></path>
 <path d="M8 8 A5.5 5.5 0 0 0 10 19" stroke="#7a7a7a" stroke-width="2" fill="none"></path>
 <rect x="4.5" y="28.5" width="18.5" height="18.5" rx="6" stroke="#6a6a6a" stroke-width="1.2" fill="none"></rect>
 <rect x="9" y="32" width="3.5" height="11" fill="#6a6a6a"></rect><rect x="15" y="32" width="3.5" height="11" fill="#6a6a6a"></rect>
 <rect x="4.5" y="53.5" width="18.5" height="18.5" rx="6" stroke="#6a6a6a" stroke-width="1.2" fill="none"></rect>
 <path d="M9 62.5 L17 58 M9 62.5 L17 67" stroke="#6a6a6a" stroke-width="1.3"></path>
 <circle cx="9" cy="62.5" r="2.3" fill="#6a6a6a"></circle><circle cx="17" cy="58" r="2.3" fill="#6a6a6a"></circle><circle cx="17" cy="67" r="2.3" fill="#6a6a6a"></circle>
 <g transform="translate(14.5 261.1)"><circle r="4.35" stroke="#8a8a8a" stroke-width="2.1" fill="none"></circle><circle r="1.3" fill="#777"></circle>
  <path d="M0 -8.8 V-5 M0 8.8 V5 M-8.8 0 H-5 M8.8 0 H5 M-6.2 -6.2 L-3.5 -3.5 M6.2 6.2 L3.5 3.5 M-6.2 6.2 L-3.5 3.5 M6.2 -6.2 L3.5 -3.5" stroke="#8a8a8a" stroke-width="1.9"></path></g>
</svg>
<div class="t" style="left: 4.2px; top: 649px; font-size: 14px; color: rgb(221, 221, 221); letter-spacing: 1.5px; transform: rotate(-90deg) scaleX(0.9); transform-origin: 0px 0px; --rt: rotate(-90deg); --fw: 51.3px;">Track 1</div>

<!-- plugins container -->
<div class="a" style="left:30px;top:494px;width:753px;height:267px;background:#0c0c0c;border:1px solid #777;border-radius:6px"></div>
<div class="a" style="left:31px;top:495px;width:18px;height:265px;background:#171717;border-radius:5px 0 0 5px"></div>
<div class="a" style="left:49px;top:495px;width:1px;height:265px;background:#666"></div>
<div class="a" style="left:34px;top:498px;width:12px;height:11px;background:#4a4a4a;border:1px solid #eee;border-top-width:3px;border-radius:1px"></div>
<div class="a" style="left:35px;top:523.2px;width:10px;height:1.8px;background:#eee"></div><div class="a" style="left:39.1px;top:519px;width:1.8px;height:10.3px;background:#eee"></div>
<div class="t" style="left: 32.1px; top: 652.1px; font-size: 14px; color: rgb(122, 122, 122); letter-spacing: 1px; transform: rotate(-90deg) scaleX(0.916981); transform-origin: 0px 0px; --rt: rotate(-90deg); --fw: 48.6px;">Plugins</div>
<svg style="left:0;top:0" width="60" height="778"><path d="M35.5 724 V736 M44.5 724 V736" stroke="#d88040" stroke-width="1.3"></path><path d="M40 724 V736" stroke="#8a5530" stroke-width="2"></path><path d="M34 746.8 H46 M34 753.9 H46" stroke="#8a5530" stroke-width="2"></path><path d="M34 750.5 H46" stroke="#d88040" stroke-width="1.3"></path></svg>
<!-- FX list -->
<div class="a" style="left:56px;top:500px;width:136px;height:256px;background:#262626;border:1px solid #555;border-radius:6px"></div>
<div class="a" style="left:62px;top:506px;width:56px;height:19px;background:#4a4a4a;border-radius:4px"></div>
<div class="t" style="left:86px;top:508px;font-size:13px;color:#ddd">+</div>
<div class="a" style="left:126px;top:506px;width:56px;height:19px;background:#4a4a4a;border-radius:4px"></div>
<div class="t" style="left:132px;top:508px;font-size:13px;color:#ddd">Add FX</div>
<div class="a" style="left:62px;top:529px;width:124px;height:1px;background:#666"></div>
<div class="a" style="left:82px;top:537px;width:104px;height:19px;background:#555"></div>
<div class="t" style="left:62px;top:540px;font-size:13px;color:#ddd">&gt;</div>
<div class="a" style="left:86px;top:540px;width:100px;height:15px;overflow:hidden"><div class="t" style="left:0;top:0;font-size:13px;color:#e4e4e4">Pink Noise Generator</div></div>
<div class="t" style="left:62px;top:559px;font-size:13px;color:#888">2</div>
<div class="t" style="left:86px;top:559px;font-size:13px;color:#e4e4e4">ReaEQ</div>
<div class="t" style="left:62px;top:578px;font-size:13px;color:#888">3</div>
<div class="a" style="left:86px;top:578px;width:100px;height:16px;overflow:hidden"><div class="t" style="left:0;top:0;font-size:13px;color:#e4e4e4">FadeOuter [bobobo]</div></div>
<!-- pink noise container -->
<div class="a" style="left:197px;top:500px;width:190px;height:255px;background:#262626;border:1px solid #555;border-radius:6px"></div>
<div class="a" style="left:198px;top:501px;width:18px;height:253px;background:#3a3a3a;border-radius:5px 0 0 5px"></div>
<div class="a" style="left:201px;top:505px;width:12px;height:11px;background:#4a4a4a;border:1px solid #eee;border-top-width:3px;border-radius:1px"></div>
<svg style="left:198px;top:520px" width="18" height="18"><path d="M4 13.5 A6 6 0 1 1 14 13.5" stroke="#555" stroke-width="2.5" fill="none"></path><circle cx="9" cy="9" r="4" fill="#2e2e2e"></circle><path d="M10 9.5 L13 13" stroke="#eee" stroke-width="1.3"></path></svg>
<div class="t" style="left: 199.2px; top: 736px; font-size: 14px; color: rgb(224, 224, 224); letter-spacing: 1.6px; transform: rotate(-90deg) scaleX(0.910798); transform-origin: 0px 0px; --rt: rotate(-90deg); --fw: 194px;">Pink Noise Generator [Lit...</div>
<svg style="left:199px;top:739.5px" width="14" height="14"><circle cx="5.5" cy="5.5" r="4" stroke="#d07a30" stroke-width="1.6" fill="none"></circle><path d="M8.5 8.5 L12 12" stroke="#d07a30" stroke-width="2"></path></svg>
<div class="a" style="left:216.5px;top:501px;width:1px;height:253px;background:#555"></div><div class="a" style="left:223px;top:506px;width:10px;height:16px;background:#3a3a3a;border-radius:4px"></div><div class="a" style="left:222px;top:531px;width:10px;height:46px;background:#1e1e1e;border-radius:4px"></div><div class="a" style="left:227px;top:534px;width:2px;height:9px;background:#ddd"></div><div class="a" style="left:223px;top:576px;width:6px;height:1px;background:#aaa"></div><div class="a" style="left:223px;top:580px;width:6px;height:1px;background:#aaa"></div>
<!-- container 3 -->
<div class="a" style="left:392px;top:720px;width:190px;height:35px;background:#262626;border:1px solid #555;border-top:none;border-radius:0 0 6px 6px"></div>
<div class="a" style="left:393px;top:720px;width:19px;height:34px;background:#3a3a3a;border-radius:0 0 0 5px"></div>
<svg style="left:395px;top:739.5px" width="14" height="14"><circle cx="5.5" cy="5.5" r="4" stroke="#d07a30" stroke-width="1.6" fill="none"></circle><path d="M8.5 8.5 L12 12" stroke="#d07a30" stroke-width="2"></path></svg>
<!-- container 4 -->
<div class="a" style="left:587px;top:720px;width:190px;height:35px;background:#262626;border:1px solid #555;border-top:none;border-radius:0 0 6px 6px"></div>
<div class="a" style="left:588px;top:720px;width:19px;height:34px;background:#3a3a3a;border-radius:0 0 0 5px"></div>
<div class="t" style="left:592px;top:735px;font-size:10px;color:#ddd;transform:rotate(-90deg);transform-origin:0 0">F</div>
<svg style="left:590px;top:739.5px" width="14" height="14"><circle cx="5.5" cy="5.5" r="4" stroke="#d07a30" stroke-width="1.6" fill="none"></circle><path d="M8.5 8.5 L12 12" stroke="#d07a30" stroke-width="2"></path></svg>
<!-- modulators container -->
<div class="a" style="left:791px;top:600px;width:366px;height:161px;background:#0c0c0c;border:1px solid #777;border-radius:6px"></div><div class="a" style="left:810px;top:600px;width:1px;height:160px;background:#666"></div>
<div class="a" style="left:792px;top:601px;width:18px;height:159px;background:#1e1e1e;border-radius:5px 0 0 5px"></div>
<svg style="left:780px;top:700px" width="40" height="70"><path d="M15.5 27 H17.5 M18.5 27 H27" stroke="#8a5530" stroke-width="1.5"></path><path d="M15.5 30.4 H17.5 M18.5 30.4 H27" stroke="#d88040" stroke-width="1.3"></path><path d="M15.5 34 H17.5 M18.5 34 H27" stroke="#8a5530" stroke-width="2"></path><path d="M16.5 44 V56 M25.5 44 V56" stroke="#d88040" stroke-width="1.3"></path><path d="M21 44 V56" stroke="#8a5530" stroke-width="2"></path></svg>
<div class="a" style="left:817px;top:600px;width:132px;height:149px;background:#262626;border:1px solid #555;border-radius:6px"></div>
<div class="a" style="left:818px;top:712px;width:130px;height:30.5px;overflow:hidden"><div class="t" style="left:18px;top:7px;font-size:13px;color:#ddd">LFO (bhjukz)</div><div class="t" style="left:5px;top:24.5px;font-size:13px;color:#ddd">+ Macro</div></div>
<!-- LFO container -->
<div class="a" style="left:953.8px;top:600px;width:180px;height:153px;background:#262626;border:1.3px solid #ddd;border-radius:6px"></div>
<div class="a" style="left:955px;top:601px;width:18.5px;height:151px;background:#444;border-radius:5px 0 0 5px"></div>
<div class="t" style="left: 956.8px; top: 667.6px; font-size: 14px; color: rgb(238, 238, 238); letter-spacing: 2px; transform: rotate(-90deg) scaleX(0.860606); transform-origin: 0px 0px; --rt: rotate(-90deg); --fw: 28.4px;">LFO</div>
<div class="a" style="left:958px;top:720px;width:14px;height:14px;border-radius:50%;background:#2a1a10;border:1px solid #3a2a20"></div>
<div class="t" style="left:962px;top:722px;font-size:10px;color:#d07a30">3</div>
<svg style="left:959px;top:738px" width="10" height="10"><path d="M1 1 L9 9 M9 1 L1 9" stroke="#fff" stroke-width="2"></path></svg>
<div class="a" style="left:980px;top:620px;width:130px;height:42.6px;background:#1e1e1e;border-radius:5px"></div>
<div class="a" style="left:980px;top:667.1px;width:62.7px;height:45.6px;background:#1e1e1e;border-radius:5px"></div>
<div class="a" style="left:1047.2px;top:667.1px;width:62.8px;height:45.6px;background:#1e1e1e;border-radius:5px"></div>
<div class="a" style="left:980px;top:716.9px;width:62.7px;height:30px;background:#1e1e1e;border-radius:5px 5px 0 0"></div>
<div class="a" style="left:1047.2px;top:716.9px;width:62.8px;height:30px;background:#1e1e1e;border-radius:5px 5px 0 0"></div>
<div class="a" style="left:1123px;top:637px;width:3px;height:93px;background:#2e2e2e;border-radius:2px"></div>
<div class="t" style="left: 993.4px; top: 668.8px; font-size: 12.5px; color: rgb(232, 232, 232); --fw: 36.4px; transform-origin: 0px 50%; transform: scaleX(1.04);">Phase</div>
<div class="t" style="left: 1060.5px; top: 668.8px; font-size: 12.5px; color: rgb(232, 232, 232); --fw: 35.1px; transform-origin: 0px 50%; transform: scaleX(1.06364);">Offset</div>
<div class="t" style="left: 995px; top: 719.3px; font-size: 12.5px; color: rgb(232, 232, 232); --fw: 33.1px; transform-origin: 0px 50%; transform: scaleX(1.03438);">Width</div>
<div class="t" style="left: 1061.4px; top: 719.3px; font-size: 12.5px; color: rgb(232, 232, 232); --fw: 32.7px; transform-origin: 0px 50%; transform: scaleX(1.02188);">Steps</div>
<div class="a" style="left:975px;top:620px;width:140px;height:127px;overflow:hidden">
<svg style="left:0;top:0" width="140" height="127">
 <g fill="none" stroke="#555" stroke-width="4.2">
  <path d="M62.4 34.8 A10.8 10.8 0 1 1 78.6 34.8"></path>
  <path d="M28.8 84.8 A10.8 10.8 0 1 1 45 84.8"></path>
  <path d="M95.5 84.8 A10.8 10.8 0 1 1 111.7 84.8"></path>
  <path d="M28.8 135 A10.8 10.8 0 1 1 45 135"></path>
  <path d="M95.5 135 A10.8 10.8 0 1 1 111.7 135"></path>
 </g>
 <g fill="#2a2a2a"><circle cx="70.5" cy="27" r="8.6"></circle><circle cx="36.9" cy="76.8" r="8.6"></circle><circle cx="103.6" cy="76.8" r="8.6"></circle><circle cx="36.9" cy="127" r="8.6"></circle><circle cx="103.6" cy="127" r="8.6"></circle></g>
 <g stroke="#f0f0f0" stroke-width="2.2">
  <path d="M58.1 29.2 L70.2 27.2"></path>
  <path d="M28.7 87.2 L37.6 77.7"></path>
  <path d="M95.4 87.2 L104.3 77.7"></path>
 </g>
</svg></div>
<!-- bottom -->
<div class="a" style="left:29px;top:761px;width:1405px;height:8px;background:#2a2a2a"></div><div class="a" style="left:28px;top:761px;width:1px;height:7px;background:#3c3c3c"></div>
<div class="a" style="left:0;top:769px;width:1571px;height:9px;background:#3a3a3a"></div>
<svg style="left:0;top:769px" width="160" height="9"><path d="M4 0 H141 L137 9 H8Z" fill="#7f8a8a"></path><rect x="0" y="2" width="3" height="7" fill="#c8d080"></rect></svg>
<div class="a" style="left:11px;top:773px;width:9px;height:9px;border:1px solid #333"></div><svg style="left:11px;top:773px" width="9" height="9"><path d="M2 2 L7 7 M7 2 L2 7" stroke="#333" stroke-width="1"></path></svg>
<div class="t" style="left: 24px; top: 771px; font-size: 13px; color: rgb(27, 27, 59); --fw: 104px; transform-origin: 0px 50%; transform: scaleX(0.845528);">FX Modulator Linking</div>

<!-- ===== right panel ===== -->
<div class="a" style="left:1433px;top:90px;width:138px;height:110px;background:#333"></div>
<div class="a" style="left:1565px;top:90px;width:6px;height:104px;background:#7a8484"></div>
<div class="a" style="left:1567px;top:93px;width:2px;height:98px;background:#2a2a2a"></div>
<svg style="left:1440px;top:95px" width="125" height="95">
 <rect x="5.9" y="8.8" width="22.2" height="7.1" fill="#5aaa90"></rect>
 <path d="M16.5 5.5 V26" stroke="#bbb" stroke-width="0.9" stroke-dasharray="1.5 1.2"></path>
 <path d="M12 21.5 L21.5 10.5 M21 21.5 L11.5 10.5" stroke="#8d9797" stroke-width="1.3"></path>
 <ellipse cx="11.3" cy="24" rx="2.6" ry="2.4" stroke="#8d9797" stroke-width="1.2" fill="none"></ellipse><ellipse cx="21.7" cy="24" rx="2.6" ry="2.4" stroke="#8d9797" stroke-width="1.2" fill="none"></ellipse>
 <path d="M38 24.4 H47.6 V8.6 H56" stroke="#8d9797" stroke-width="1.8" fill="none"></path>
 <path d="M67.5 24 L86.5 8.7" stroke="#8d9797" stroke-width="1.8"></path>
 <path d="M100 13.5 A3.9 3.9 0 1 1 106.5 14.8 Q110 17 112 14.5 Q115 14 115 18 Q115 23.5 107 23.5 Q98.5 23.5 98 18.5 Q98 16 100 15.2Z" fill="#8d9797"></path>
 <path d="M100.3 11 L97 12 L100 13Z" fill="#8d9797"></path>
 <circle cx="103.8" cy="11.2" r="0.9" fill="#333"></circle>
 <!-- row2 -->
 <path d="M6 41 L8 36 L9.5 45 L11 38 L12.5 43 L14.5 40 L16 42 L19 41 L22 44" stroke="#9aa0a0" stroke-width="1" fill="none"></path>
 <rect x="17.6" y="41.5" width="10.4" height="14.5" fill="#8d9797"></rect>
 <circle cx="22.3" cy="47.5" r="2.8" stroke="#333" stroke-width="1" fill="none"></circle><path d="M19 53.5 L22 50" stroke="#333" stroke-width="1"></path>
 <rect x="36.3" y="35.7" width="21.4" height="22" stroke="#5aaa90" stroke-width="1.2" fill="none"></rect><rect x="36" y="35.3" width="22" height="3.3" fill="#5aaa90"></rect><rect x="55" y="36" width="1.6" height="1.6" fill="#222"></rect>
 <path d="M39.5 46 L41 40 L42.5 50 L44 43 L45.5 47 L48 45.5 L50 47 L53 46.5" stroke="#9aa0a0" stroke-width="1" fill="none"></path>
 <text x="50.5" y="56" font-size="6.5" fill="#bbb" font-family="Liberation Sans">2</text>
 <text x="65.6" y="43" font-size="8.5" fill="#9aa0a0" font-family="Liberation Sans" letter-spacing="1.3">FX</text>
 <path d="M82.5 37 Q87 38 86 43.5" stroke="#3ac0a0" stroke-width="1.1" fill="none"></path><path d="M83.3 43 L86 47 L88.8 43Z" fill="#3ac0a0"></path>
 <path d="M69 49 L70.5 45 L72 55 L73.5 47 L75 51 L77.5 49.5 L80 51 L84 50" stroke="#9aa0a0" stroke-width="1" fill="none"></path>
 <rect x="106.5" y="48" width="1.2" height="1" fill="#999"></rect>
 <!-- row 3 -->
 <rect x="3" y="62" width="28" height="28" fill="#2c4b45"></rect>
 <path d="M7.5 65 L13.5 69 L14.5 71 L25.5 82 Q27.5 84.5 25.5 86.5 L24 88 Q22 90 19.5 88 L8.5 77 L9 74.5Z" fill="#1fc8a0"></path>
 <path d="M9 74.5 L14.5 71" stroke="#2c4b45" stroke-width="0.8"></path>
 <rect x="46.5" y="78" width="1.2" height="1" fill="#999"></rect>
 <path d="M83 68 V84.2 L69.6 76Z" fill="#8d9797"></path>
 <path d="M101 68 V84.2 L114.3 76Z" fill="#8d9797"></path>
</svg>
<!-- fx slot 1 -->
<div class="a" style="left:1433px;top:195px;width:138px;height:15px;background:#333"></div>
<div class="a" style="left:1439px;top:201px;width:130px;height:99px;background:#9a9a9a;border-radius:3px 3px 0 0"></div>
<div class="t" style="left: 1442.5px; top: 204px; font-size: 11.5px; color: rgb(44, 44, 58); --fw: 122.5px; transform-origin: 0px 50%; transform: scaleX(0.887681);">Frequency Spectrum Analy</div>
<div class="a" style="left:1441px;top:218px;width:126px;height:80px;background:#000"></div>
<svg style="left:1441px;top:218px" width="126" height="80">
 <path d="M0 39 L10 38 L20 37 L30 35.5 L38 33 L42 31 L46 29.5 L49 32.8 L52.5 36.3 L56.6 33.6 L60 39 L62 40 L63 37 L65 43 L68 45 L69.5 49 L70.5 40 L72 39 L75 44 L77 48 L79 47 L80 55 L81 46 L83 47 L83.5 58 L85 47 L87 52 L89 51 L90 53 L91.5 62 L93 56 L95 57 L97 59 L98 72 L99 62 L100 64 L102 66 L103 76 L104 66 L105 70 L107 64 L108 71 L110 72 L113 77 L115 80 L0 80Z" fill="#222005"></path>
 <path d="M0 39 L10 38 L20 37 L30 35.5 L38 33 L42 31 L46 29.5 L49 32.8 L52.5 36.3 L56.6 33.6 L60 39 L62 40 L63 37 L65 43 L68 45 L69.5 49 L70.5 40 L72 39 L75 44 L77 48 L79 47 L80 55 L81 46 L83 47 L83.5 58 L85 47 L87 52 L89 51 L90 53 L91.5 62 L93 56 L95 57 L97 59 L98 72 L99 62 L100 64 L102 66 L103 76 L104 66 L105 70 L107 64 L108 71 L110 72 L113 77 L115 80" stroke="#f4f020" stroke-width="1.2" fill="none"></path>
 <path d="M88 52 L95 57 L103 64 L110 71 L115.5 80 L111 80 L104 71 L96 61 L88 54.5Z" fill="#f4f020"></path><path d="M92 60 L92.5 68 L94 60 M100 66 L100.5 74 L102 67 M106 70 L106.5 77 L108 71" stroke="#f4f020" stroke-width="1.1" fill="none"></path>
</svg>
<div class="t" style="left: 1441px; top: 218.8px; font-size: 10.5px; font-family: &quot;Liberation Mono&quot;; font-weight: bold; color: rgb(104, 104, 104); --fw: 63px; transform-origin: 0px 50%; transform: scaleX(1.26);">FFT 1024</div>
<div class="t" style="left: 1441px; top: 226.6px; font-size: 10.5px; font-family: &quot;Liberation Mono&quot;; font-weight: bold; color: rgb(104, 104, 104); --fw: 63px; transform-origin: 0px 50%; transform: scaleX(1.26);">-120dB f</div>
<!-- fx slot 2 -->
<div class="a" style="left:1439px;top:302px;width:130px;height:99px;background:#9a9a9a;border-radius:3px 3px 0 0"></div>
<div class="t" style="left: 1458.9px; top: 305px; font-size: 11.5px; color: rgb(44, 44, 58); --fw: 90px; transform-origin: 0px 50%; transform: scaleX(0.918367);">Oscilloscope Meter</div>
<div class="a" style="left:1441px;top:319px;width:126px;height:81px;background:#000"></div>
<svg style="left:1441px;top:319px" width="126" height="81">
 <path d="M0 15.6 H126 M0 69.5 H126" stroke="#333" stroke-width="1"></path>
 <path d="M0 42.6 H126" stroke="#c090c0" stroke-width="1.2"></path>
 <g fill="#c090c0">
  <path d="M0 31 L1 31 L1 33 L3 34 L4 35 L5 36 L6 37.5 L8 38 L9 39.5 L11 40.5 L13 41.5 L14 42 L14 43.5 L11 44 L9 46 L7 47 L6 49 L4 50 L3 52 L1 53 L0 54Z"></path>
  <path d="M30 26 L31 26 L31 33 L32 32 L34 33 L35 34 L37 36 L39 38 L40 39 L42 41 L44 42 L44 43 L41 44 L39 46 L38 48 L36 49 L34 51 L33 53 L32 54.5 L31 52 L30 54Z"></path>
  <path d="M61 31 L62 31 L62 28 L63 27 L63 31 L65 33 L66 35 L67 37 L68 35 L69 36 L70 38 L72 40 L74 41.5 L76 42 L76 43 L73 44 L71 46 L70 48 L68 50 L67 49 L65 51 L64 54 L62 52 L61 50Z"></path>
  <path d="M92 34 L93 30 L94 29 L95 33 L96 33 L98 35 L100 36 L102 38 L104 40 L106 42 L106 43 L104 44 L102 46 L100 48 L98 50 L96 51 L95.5 59 L94.5 54 L93 53 L92 53Z"></path>
  <path d="M123 33 L124 28 L126 26 L126 57 L125 56 L124 52 L123 50Z"></path>
 </g>
 <text x="0" y="11" font-family="Liberation Mono" font-weight="bold" font-size="11" fill="#686868">+2</text>
 <rect x="91" y="0" width="35" height="12" fill="#0a1ee8"></rect><rect x="91.5" y=".5" width="34" height="11" fill="none" stroke="#3a8aff"></rect>
 <text x="92.5" y="10" font-family="Liberation Mono" font-weight="bold" font-size="11" fill="#40a8ff" textLength="32" lengthAdjust="spacingAndGlyphs">1.7s</text>
 <rect x="91" y="69" width="35" height="12" fill="#0a1ee8"></rect><rect x="91.5" y="69.5" width="34" height="11" fill="none" stroke="#3a8aff"></rect>
 <text x="92.5" y="79" font-family="Liberation Mono" font-weight="bold" font-size="11" fill="#40a8ff" textLength="32" lengthAdjust="spacingAndGlyphs">hold</text>
</svg>
<div class="a" style="left:1439px;top:401px;width:130px;height:22px;background:#2a2a2a"></div>
<div class="a" style="left:1462px;top:423px;width:84px;height:1px;background:#444"></div>
<div class="a" style="left:1433px;top:200px;width:6px;height:569px;background:#333"></div>
<div class="a" style="left:1569px;top:200px;width:2px;height:569px;background:#333"></div>
<!-- master strip -->
<div class="a" style="left:1439px;top:424px;width:130px;height:273px;background:#333"></div>
<div class="t" style="left: 1472.5px; top: 431px; font-size: 11.5px; color: rgb(221, 221, 221); --fw: 31.7px; transform-origin: 0px 50%; transform: scaleX(0.990625);">center</div>
<div class="a" style="left:1479px;top:443px;width:19px;height:19px;border-radius:50%;background:radial-gradient(circle at 50% 30%,#d8d8d8,#8a8f8f);box-shadow:0 1px 1px #111"></div>
<div class="a" style="left:1487px;top:446px;width:3px;height:3px;border-radius:50%;background:#111"></div>
<div class="a" style="left:1445px;top:471px;width:94px;height:206px;background:#262626"></div>
<div class="t" style="left: 1473.8px; top: 475.5px; font-size: 11.5px; color: rgb(168, 168, 168); --fw: 36px; transform-origin: 0px 50%; transform: scaleX(0.9);">-46.9dB</div>
<div class="t" style="left: 1452.2px; top: 492.8px; font-size: 10.5px; color: rgb(176, 176, 176); --fw: 20.7px; transform-origin: 0px 50%; transform: scaleX(0.8625);">-14.6</div>
<div class="t" style="left: 1487.3px; top: 492.8px; font-size: 10.5px; color: rgb(176, 176, 176); --fw: 21px; transform-origin: 0px 50%; transform: scaleX(0.875);">-14.6</div>
<div style="position:absolute;left:1446px;top:504px;font-size:10px;color:#777;line-height:15.4px;width:68px">
 <div>12<span style="float:right">12</span></div><div>6<span style="float:right">6</span></div><div>0-<span style="float:right">-0</span></div><div>6-<span style="float:right">-6</span></div><div>12-<span style="float:right">-12</span></div><div>18-<span style="float:right">-18</span></div><div>24-<span style="float:right">-24</span></div><div>30-<span style="float:right">-30</span></div><div>36-<span style="float:right">-36</span></div><div>42-<span style="float:right">-42</span></div>
</div>
<div class="t" style="left:1474px;top:520px;font-size:10px;color:#777">-6-</div>
<div class="t" style="left:1472px;top:548px;font-size:10px;color:#777">-18-</div>
<div class="t" style="left:1472px;top:579px;font-size:10px;color:#777">-30-</div>
<div class="t" style="left:1472px;top:609px;font-size:10px;color:#777">-42-</div>
<div class="a" style="left:1462px;top:632px;width:17px;height:2px;background:#00fa8c"></div>
<div class="a" style="left:1481px;top:632px;width:17px;height:2px;background:#00fa8c"></div>
<div class="a" style="left:1462px;top:646px;width:17px;height:19px;background:#00fa8c"></div>
<div class="a" style="left:1481px;top:646px;width:17px;height:19px;background:#00fa8c"></div>
<div class="t" style="left:1474px;top:639px;font-size:10px;color:#777">-54-</div>
<div class="a" style="left:1445px;top:665px;width:70px;height:12px;background:#1e1e1e"></div>
<div class="t" style="left: 1452.6px; top: 666px; font-size: 10.5px; font-weight: bold; color: rgb(32, 184, 128); --fw: 20px; transform-origin: 0px 50%; transform: scaleX(0.869565);">RMS</div>
<div class="t" style="left: 1487px; top: 666px; font-size: 10.5px; font-weight: bold; color: rgb(32, 184, 128); --fw: 21px; transform-origin: 0px 50%; transform: scaleX(0.875);">-23.2</div>
<div class="a" style="left:1526px;top:500px;width:2px;height:168px;background:#0a0a0a"></div>
<div class="a" style="left:1517px;top:552px;width:22px;height:1px;background:#888"></div>
<div class="a" style="left:1516px;top:616px;width:21px;height:22px;border-radius:6px 6px 2px 2px;background:linear-gradient(#444 0%,#e8eeee 12%,#cfd8d6 22%,#3e4a48 35%,#4a5250 70%,#6a6068 100%);border:1px solid #111"></div><div class="a" style="left:1516px;top:637px;width:21px;height:22px;border-radius:2px 2px 6px 6px;background:linear-gradient(#706870 0%,#a8a0a4 25%,#fff 55%,#e0d8dc 62%,#5a4850 80%,#333 100%);border:1px solid #111"></div>
<div class="a" style="left:1445px;top:677px;width:94px;height:20px;background:#262626"></div>
<div class="t" style="left: 1470.5px; top: 680.6px; font-size: 12px; color: rgb(224, 224, 224); --fw: 42px; transform-origin: 0px 50%; transform: scaleX(0.84);">MASTER</div>
<!-- master buttons -->
<div class="a" style="left:1546px;top:432px;width:19px;height:19px;background:linear-gradient(#8a9090,#6a7070);border:1px solid #222;border-radius:2px"></div>
<svg style="left:1546px;top:432px" width="19" height="19"><circle cx="8" cy="9.5" r="4.5" stroke="#555" fill="none"></circle><circle cx="11" cy="9.5" r="4.5" stroke="#555" fill="none"></circle></svg>
<div class="t" style="left: 1545.5px; top: 454.5px; font-size: 10.5px; font-weight: bold; color: rgb(154, 154, 154); --fw: 20px; transform-origin: 0px 50%; transform: scaleX(0.606061);">MONO</div>
<div class="a" style="left:1546px;top:468px;width:19px;height:19px;background:linear-gradient(#3a3e3e,#2a2e2e);border:1px solid #111;border-radius:2px"></div>
<div class="t" style="left:1549px;top:471px;font-size:12px;color:#e06060;transform:scaleX(.85);transform-origin:left">M</div>
<div class="a" style="left:1546px;top:488px;width:19px;height:19px;background:linear-gradient(#3a3e3e,#2a2e2e);border:1px solid #111;border-radius:2px"></div>
<div class="t" style="left:1551px;top:491px;font-size:12px;color:#d8c050">S</div>
<div class="a" style="left:1546px;top:513px;width:19px;height:19px;background:#2a3a44;border:1px solid #111;border-radius:2px"></div>
<svg style="left:1546px;top:513px" width="19" height="19"><path d="M2 17 L7 2 L10 2 L5 17Z" fill="#20c0a0"></path><path d="M7 17 L12 2 L15 2 L10 17Z" fill="#e8d820"></path></svg>
<div class="t" style="left: 1543.6px; top: 536px; font-size: 11px; font-weight: bold; color: rgb(154, 154, 154); --fw: 22.3px; transform-origin: 0px 50%; transform: scaleX(0.571795);">ROUTE</div>
<div class="a" style="left:1546px;top:551px;width:19px;height:36px;background:#2a7a5a;border:1px solid #0a5a3a;border-radius:3px"></div>
<div class="a" style="left:1547px;top:570px;width:17px;height:16px;background:#3cc090"></div>
<div class="t" style="left:1549px;top:555px;font-size:11px;color:#5ae0b0">FX</div>
<svg style="left:1547px;top:570px" width="17" height="16"><path d="M6 6 A3.5 3.5 0 1 0 11 6" stroke="#0a5a3a" stroke-width="1.3" fill="none"></path><path d="M8.5 4.5 V8.5" stroke="#0a5a3a" stroke-width="1.3"></path></svg>
<div class="a" style="left:1546px;top:594px;width:19px;height:19px;background:linear-gradient(#7a8080,#5a6060);border:1px solid #222;border-radius:2px"></div>
<svg style="left:1546px;top:594px" width="19" height="19"><path d="M4 12 L9 7 L14 11" stroke="#333" stroke-width="1.3" fill="none"></path><circle cx="4" cy="12" r="1.5" fill="#333"></circle><circle cx="9" cy="7" r="1.5" fill="#333"></circle><circle cx="14" cy="11" r="1.5" fill="#333"></circle></svg>
<div class="t" style="left: 1545.8px; top: 615.5px; font-size: 11px; font-weight: bold; color: rgb(154, 154, 154); --fw: 18.3px; transform-origin: 0px 50%; transform: scaleX(0.677778);">TRIM</div>
<div class="a" style="left:1546px;top:632px;width:19px;height:19px;background:linear-gradient(#3a3e3e,#2a2e2e);border:1px solid #111;border-radius:2px"></div>
<div class="t" style="left:1553px;top:634px;font-size:13px;font-weight:bold;color:#ddd;font-family:'Liberation Serif'">i</div>
<!-- cpu -->
<div class="a" style="left:1439px;top:697px;width:132px;height:6px;background:#7f8989"></div>
<div class="a" style="left:1442px;top:700px;width:125px;height:1px;background:#222"></div>
<div class="a" style="left:1439px;top:703px;width:132px;height:6px;background:#2a2a2a"></div>
<div class="a" style="left:1439px;top:709px;width:132px;height:69px;background:#a9aeae"></div>
<div class="a" style="left:1565px;top:709px;width:6px;height:69px;background:#7f8989"></div><div class="a" style="left:1567px;top:713px;width:1.3px;height:65px;background:#333"></div>
<div class="t" style="left: 1443.6px; top: 714.8px; font-size: 11.5px; color: rgb(42, 42, 68); --fw: 51.4px; transform-origin: 0px 50%; transform: scaleX(0.901754);">CPU: 7.5%</div>
<div class="t" style="left: 1443.6px; top: 728.3px; font-size: 11.5px; color: rgb(42, 42, 68); --fw: 68px; transform-origin: 0px 50%; transform: scaleX(0.906667);">RT CPU: 0.7%</div>
<div class="a" style="left:1572px;top:225px;width:6px;height:1px;background:#aaa"></div>
<div class="a" style="left:1572px;top:275px;width:6px;height:1px;background:#aaa"></div>
<div class="a" style="left:1572px;top:688px;width:6px;height:1px;background:#aaa"></div><div class="a" style="left:1572px;top:756px;width:6px;height:22px;background:#2a2a2a"></div><div class="t" style="left:1571px;top:765px;font-size:12px;color:#e8e8ff">/4</div>

<div class="a" style="left:1080px;top:101px;width:292px;height:159px;background:#98b4fc;border:2px solid #ff86b4;border-radius:11px"></div>
<div class="t" style="left: 1117px; top: 136.83px; font-size: 14.5px; color: rgb(17, 17, 17); --fw: 142px; transform-origin: 0px 50%; transform: scaleX(1.02899);">i'd like to animate this</div>
<div class="a" style="left:228px;top:369px;width:724px;height:359px;background:#f0f0f0;border:1px solid #6a6a6a"></div>
<div class="a" style="left:229px;top:370px;width:722px;height:29px;background:#fff"></div>
<svg style="left:237px;top:375px" width="16" height="16" viewBox="0 0 16 16"><path d="M1.4 4.6 Q3.5 0.4 8.5 0.4 Q14 0.9 15.4 7" stroke="#1a80d0" stroke-width="2" fill="none"></path><path d="M0.8 4.3 C-0.6 9 2.5 13.6 7 15.8 C7.6 11 5 7 0.8 4.3Z" fill="#5ab82a"></path><path d="M6 4 C9 4.4 12.6 5 15 7 C15 11 11.5 14.6 7.6 15.8 C9 12 9 7 6 4Z" fill="#b8604a"></path></svg>
<div class="t" style="left: 258.3px; top: 378.22px; font-size: 12.5px; color: rgb(154, 154, 154); --fw: 135px; transform-origin: 0px 50%; transform: scaleX(0.950704);">Modulators - Track 1 [1/4]</div>
<svg style="left:786px;top:374px" width="16" height="18"><path d="M4.5 1.5 H11.5 M6 1.5 V8 L3 11 H13 L10 8 V1.5 M8 11 V17" stroke="#777" stroke-width="1" fill="#fff"></path></svg>
<div class="a" style="left:832px;top:383px;width:10px;height:1px;background:#ddd"></div>
<div class="a" style="left:231.5px;top:401px;width:526px;height:21px;background:#e1e1e1;border:1px solid #adadad;"></div>
<div class="t" style="left: 235.3px; top: 406.24px; font-size: 12px; color: rgb(0, 0, 0); --fw: 44.7px; transform-origin: 0px 50%; transform: scaleX(0.859615);">No preset</div>
<svg style="left:743px;top:407px" width="10" height="8"><path d="M1 2 L5 6 L9 2" stroke="#333" stroke-width="1.1" fill="none"></path></svg>
<div class="a" style="left:762px;top:403px;width:16px;height:18px;background:#e1e1e1;border:1px solid #adadad;"></div>
<div class="t" style="left:766.5px;top:405.84px;font-size:12px;color:#000">+</div>
<div class="a" style="left:783px;top:403px;width:43px;height:18px;background:#e1e1e1;border:1px solid #adadad;"></div>
<div class="t" style="left: 789.4px; top: 405.84px; font-size: 12px; color: rgb(0, 0, 0); --fw: 28.8px; transform-origin: 0px 50%; transform: scaleX(0.822857);">Param</div>
<div class="a" style="left:831px;top:403px;width:60px;height:18px;background:#e1e1e1;border:1px solid #adadad;"></div>
<div class="t" style="left: 847.9px; top: 405.84px; font-size: 12px; color: rgb(0, 0, 0); --fw: 18px; transform-origin: 0px 50%; transform: scaleX(0.947368);">2 in</div>
<div class="a" style="left:231px;top:425px;width:220px;height:253px;background:#fff;border:1px solid #828790;"></div>
<div class="a" style="left:238.5px;top:428.4px;width:13.5px;height:13.5px;background:#fff;border:1px solid #111"></div>
<svg style="left:238.5px;top:428.4px" width="14" height="14"><path d="M3 7 L5.8 10.2 L11 3.5" stroke="#111" stroke-width="2" fill="none"></path></svg>
<div class="a" style="left:256px;top:427.6px;width:62px;height:16px;background:#e6e6e6"></div>
<div class="t" style="left: 258.3px; top: 429.62px; font-size: 12.5px; color: rgb(0, 0, 0); --fw: 53px; transform-origin: 0px 50%; transform: scaleX(0.84127);">LFO Native</div>
<div class="a" style="left:232.5px;top:682.3px;width:42px;height:20px;background:#e1e1e1;border:1px solid #adadad;"></div>
<div class="t" style="left: 243px; top: 686.34px; font-size: 12px; color: rgb(0, 0, 0); --fw: 20px; transform-origin: 0px 50%; transform: scaleX(0.952381);">Add</div>
<div class="a" style="left:280.4px;top:682.3px;width:47px;height:20px;background:#e1e1e1;border:1px solid #adadad;"></div>
<div class="t" style="left: 283.5px; top: 686.34px; font-size: 12px; color: rgb(0, 0, 0); --fw: 40px; transform-origin: 0px 50%; transform: scaleX(0.888889);">Remove</div>
<div class="t" style="left: 231px; top: 708.14px; font-size: 12px; color: rgb(0, 0, 0); --fw: 103px; transform-origin: 0px 50%; transform: scaleX(0.887931);">0.01%/0.02% 0/0 spls</div>
<div class="a" style="left:457px;top:426px;width:420px;height:20px;background:#fff;border:1px solid #7a7a7a;"></div>
<div class="a" style="left:462px;top:451.4px;width:315px;height:20.5px;background:#e1e1e1;border:1px solid #adadad;"></div>
<div class="t" style="left: 466px; top: 455.34px; font-size: 12px; color: rgb(0, 0, 0); --fw: 44.7px; transform-origin: 0px 50%; transform: scaleX(0.859615);">No preset</div>
<svg style="left:763px;top:457px" width="10" height="8"><path d="M1 2 L5 6 L9 2" stroke="#333" stroke-width="1.1" fill="none"></path></svg>
<div class="a" style="left:782px;top:453px;width:16px;height:18px;background:#e1e1e1;border:1px solid #adadad;"></div>
<div class="t" style="left:786.5px;top:455.84px;font-size:12px;color:#000">+</div>
<div class="a" style="left:803px;top:453px;width:43px;height:18px;background:#e1e1e1;border:1px solid #adadad;"></div>
<div class="t" style="left: 809.4px; top: 455.84px; font-size: 12px; color: rgb(0, 0, 0); --fw: 28.8px; transform-origin: 0px 50%; transform: scaleX(0.822857);">Param</div>
<div class="a" style="left:851px;top:453px;width:40px;height:18px;background:#e1e1e1;border:1px solid #adadad;"></div>
<div class="a" style="left:462px;top:481.6px;width:420px;height:18.5px;border-top:1px solid #a0a0a0;border-left:1px solid #a0a0a0;border-bottom:1px solid #fff"></div>
<div class="t" style="left: 625.4px; top: 484.84px; font-size: 12px; color: rgb(0, 0, 0); --fw: 103.6px; transform-origin: 0px 50%; transform: scaleX(0.88547);">LFO Native Modulator</div>
<div class="t" style="left: 644.4px; top: 506.14px; font-size: 12px; color: rgb(0, 0, 0); --fw: 31.6px; transform-origin: 0px 50%; transform: scaleX(0.877778);">Output</div>
<div class="t" style="left: 652.8px; top: 526.14px; font-size: 12px; color: rgb(0, 0, 0); --fw: 23.2px; transform-origin: 0px 50%; transform: scaleX(0.859259);">Input</div>
<div class="t" style="left: 648.3px; top: 546.14px; font-size: 12px; color: rgb(0, 0, 0); --fw: 27.7px; transform-origin: 0px 50%; transform: scaleX(0.865625);">Offset</div>
<div class="t" style="left: 649.1px; top: 566.14px; font-size: 12px; color: rgb(0, 0, 0); --fw: 26.9px; transform-origin: 0px 50%; transform: scaleX(0.867742);">Width</div>
<div class="t" style="left: 650.2px; top: 586.14px; font-size: 12px; color: rgb(0, 0, 0); --fw: 25.8px; transform-origin: 0px 50%; transform: scaleX(0.832258);">Steps</div>
<div class="t" style="left: 642.3px; top: 606.14px; font-size: 12px; color: rgb(0, 0, 0); --fw: 33.7px; transform-origin: 0px 50%; transform: scaleX(0.821951);">Multiply</div>
<svg style="left:681px;top:502px" width="190" height="122">
 <g fill="#cacaca"><rect x="0.2" y="1.3" width="200" height="17" rx="8.5"></rect><rect x="0.2" y="21.3" width="200" height="17" rx="8.5"></rect><rect x="0.2" y="41.3" width="200" height="17" rx="8.5"></rect><rect x="0.2" y="61.3" width="200" height="17" rx="8.5"></rect><rect x="0.2" y="81.3" width="200" height="17" rx="8.5"></rect><rect x="0.2" y="101.3" width="200" height="17" rx="8.5"></rect></g>
 <g stroke="#555" stroke-width="3.5" stroke-linecap="round"><path d="M9 9.8 H200 M9 29.8 H200 M9 49.8 H200 M9 69.8 H200 M9 89.8 H200 M9 109.8 H200 "></path></g>
 <path d="M11.5 3 V17 M11.5 23 V37" stroke="#111" stroke-width="1"></path>
</svg>
<div class="thumb" style="left:754.7px;top:503.8px"></div>
<div class="thumb" style="left:754.7px;top:523.8px"></div>
<div class="thumb" style="left:684.7px;top:543.8px"></div>
<div class="thumb" style="left:851.2px;top:563.8px"></div>
<div class="thumb" style="left:684.7px;top:583.8px"></div>
<div class="thumb" style="left:684.7px;top:603.8px"></div>
<div class="a" style="left:456.6px;top:624.8px;width:489.4px;height:100px;background:#262626"></div>
<div class="t" style="left: 544.7px; top: 637.29px; font-size: 12.3px; color: rgb(230, 230, 230); --fw: 313.9px; transform-origin: 0px 50%; transform: scaleX(1.04286);">This plugin is part of "Saxmand_FX Modulator Linking".</div>
<div class="t" style="left: 582.8px; top: 657.29px; font-size: 12.3px; color: rgb(230, 230, 230); --fw: 237px; transform-origin: 0px 50%; transform: scaleX(1.04867);">The script helps working with modulators.</div>
<div class="t" style="left: 570.9px; top: 677.29px; font-size: 12.3px; color: rgb(230, 230, 230); --fw: 260.8px; transform-origin: 0px 50%; transform: scaleX(1.06016);">Run the script to map and adjust parameters.</div>
<div class="a" style="left:946.3px;top:369px;width:5px;height:359px;background:#fff"></div>
<div class="a" style="left:865px;top:274.4px;width:344px;height:363px;background:#f0f0f0;border:1px solid #555;border-right-color:#fff;border-bottom:1.6px solid #fff"></div>
<div class="a" style="left:866px;top:275.4px;width:342px;height:24.6px;background:#fff"></div>
<svg style="left:869px;top:279px" width="16" height="16" viewBox="0 0 16 16"><path d="M1.4 4.6 Q3.5 0.4 8.5 0.4 Q14 0.9 15.4 7" stroke="#1a80d0" stroke-width="2" fill="none"></path><path d="M0.8 4.3 C-0.6 9 2.5 13.6 7 15.8 C7.6 11 5 7 0.8 4.3Z" fill="#5ab82a"></path><path d="M6 4 C9 4.4 12.6 5 15 7 C15 11 11.5 14.6 7.6 15.8 C9 12 9 7 6 4Z" fill="#b8604a"></path></svg>
<div class="t" style="left: 890px; top: 280.72px; font-size: 12.5px; color: rgb(0, 0, 0); --fw: 264px; transform-origin: 0px 50%; transform: scaleX(0.970588);">Parameter Modulation/Link for Input / LFO Native</div>
<svg style="left:1187px;top:281px" width="12" height="12"><path d="M1 1 L11 11 M11 1 L1 11" stroke="#111" stroke-width="1.1"></path></svg>
<svg style="left:1140px;top:277px" width="17" height="19"><path d="M4.5 1.5 H12.5 M6 1.5 V8 L3 11.5 H14 L11 8 V1.5 M8.5 11.5 V17.5" stroke="#999" stroke-width="1.1" fill="#fff"></path></svg>
<svg style="left:1081.5px;top:290.3px" width="14" height="20"><path d="M0.6 0.6 V16 L4 12.6 L6.8 17.8 L9.2 16.8 L6.6 11.6 L11.6 11.4Z" fill="#fff" stroke="#111" stroke-width="1.1" stroke-linejoin="round"></path></svg>
<div class="cb" style="left:878px;top:311px"><svg width="13" height="13"><path d="M2.5 6.5 L5 9.5 L10.5 3" stroke="#333" stroke-width="1.3" fill="none"></path></svg></div>
<div class="t" style="left: 894.5px; top: 312.24px; font-size: 12px; color: rgb(0, 0, 0); --fw: 311.8px; transform-origin: 0px 50%; transform: scaleX(0.873389);">Enable parameter modulation, baseline value (envelope overrides):</div>
<div class="a" style="left:878px;top:330px;width:326px;height:20px;background:#cacaca;border-radius:10px"></div>
<div class="a" style="left:886px;top:338.3px;width:310px;height:3.7px;background:#555;border-radius:2px"></div>
<div class="thumb" style="left:1033.5px;top:332px"></div>
<div class="t" style="left: 878px; top: 360.04px; font-size: 12px; color: rgb(0, 0, 0); --fw: 34.5px; transform-origin: 0px 50%; transform: scaleX(0.884615);">Output:</div>
<div class="a" style="left:920.3px;top:362.5px;width:284px;height:9.5px;background:#e6e6e6;border:1px solid #bcbcbc;"></div>
<div class="a" style="left:921.3px;top:363.5px;width:92px;height:7.5px;background:#06b025"></div>
<div class="cb" style="left:878px;top:380.2px"></div>
<div class="t" style="left: 894.5px; top: 381.24px; font-size: 12px; color: rgb(0, 0, 0); --fw: 145.7px; transform-origin: 0px 50%; transform: scaleX(0.872455);">Audio control signal (sidechain)</div>
<div class="a" style="left:874.5px;top:409.5px;width:329px;height:194.5px;border:1px solid #dcdcdc"></div>
<div class="a" style="left:876px;top:403px;width:40px;height:14px;background:#f0f0f0"></div>
<div class="cb" style="left:878px;top:403.3px"><svg width="13" height="13"><path d="M2.5 6.5 L5 9.5 L10.5 3" stroke="#333" stroke-width="1.3" fill="none"></path></svg></div>
<div class="t" style="left: 894.5px; top: 404.34px; font-size: 12px; color: rgb(0, 0, 0); --fw: 18.5px; transform-origin: 0px 50%; transform: scaleX(0.804348);">LFO</div>
<div class="t" style="left: 883.4px; top: 426.04px; font-size: 12px; color: rgb(0, 0, 0); --fw: 32.9px; transform-origin: 0px 50%; transform: scaleX(0.865789);">Shape:</div>
<div class="a" style="left:937.3px;top:421.2px;width:92.5px;height:20.7px;background:#e1e1e1;border:1px solid #adadad;"></div>
<div class="t" style="left: 940.7px; top: 426.04px; font-size: 12px; color: rgb(0, 0, 0); --fw: 28px; transform-origin: 0px 50%; transform: scaleX(0.903226);">saw L</div>
<svg style="left:1015px;top:428px" width="10" height="8"><path d="M1 2 L5 6 L9 2" stroke="#333" stroke-width="1.1" fill="none"></path></svg>
<div class="cb" style="left:1039px;top:425px"></div>
<div class="t" style="left: 1055.7px; top: 426.04px; font-size: 12px; color: rgb(0, 0, 0); --fw: 56.7px; transform-origin: 0px 50%; transform: scaleX(0.885938);">Tempo sync</div>
<div class="a" style="left:1127.2px;top:421.2px;width:65.5px;height:20.4px;background:#e1e1e1;border:1px solid #adadad;"></div>
<div class="t" style="left: 1130.3px; top: 426.04px; font-size: 12px; color: rgb(0, 0, 0); --fw: 58px; transform-origin: 0px 50%; transform: scaleX(0.865672);">Learn phase</div>
<div class="t" style="left: 883.4px; top: 454.64px; font-size: 12px; color: rgb(0, 0, 0); --fw: 32.9px; transform-origin: 0px 50%; transform: scaleX(0.865789);">Speed:</div>
<div class="a" style="left:937px;top:450px;width:185px;height:20px;background:#cacaca;border-radius:10px"></div>
<div class="a" style="left:945px;top:458.2px;width:169px;height:3.7px;background:#555;border-radius:2px"></div>
<div class="t" style="left: 883.4px; top: 480.94px; font-size: 12px; color: rgb(0, 0, 0); --fw: 42.2px; transform-origin: 0px 50%; transform: scaleX(0.861224);">Strength:</div>
<div class="a" style="left:937px;top:476px;width:185px;height:20px;background:#cacaca;border-radius:10px"></div>
<div class="a" style="left:945px;top:484.2px;width:169px;height:3.7px;background:#555;border-radius:2px"></div>
<div class="t" style="left: 883.4px; top: 506.84px; font-size: 12px; color: rgb(0, 0, 0); --fw: 32.3px; transform-origin: 0px 50%; transform: scaleX(0.872973);">Phase:</div>
<div class="a" style="left:937px;top:502px;width:185px;height:20px;background:#cacaca;border-radius:10px"></div>
<div class="a" style="left:945px;top:510.2px;width:169px;height:3.7px;background:#555;border-radius:2px"></div>
<div class="a" style="left:1029px;top:452px;width:1.2px;height:16px;background:#111"></div>
<div class="a" style="left:1029px;top:504px;width:1.2px;height:16px;background:#111"></div>
<div class="thumb" style="left:1037.9px;top:452px"></div>
<div class="thumb" style="left:1103.9px;top:478px"></div>
<div class="thumb" style="left:940.5px;top:504px"></div>
<div class="a" style="left:1126.2px;top:451.2px;width:47.6px;height:19.5px;background:#fff;border:1px solid #7a7a7a;"></div>
<div class="a" style="left:1126.2px;top:477.1px;width:47.6px;height:19.5px;background:#fff;border:1px solid #7a7a7a;"></div>
<div class="a" style="left:1126.2px;top:503.3px;width:47.6px;height:19.5px;background:#fff;border:1px solid #7a7a7a;"></div>
<div class="t" style="left: 1129px; top: 454.64px; font-size: 12px; color: rgb(0, 0, 0); --fw: 33px; transform-origin: 0px 50%; transform: scaleX(0.891892);">2.3396</div>
<div class="t" style="left: 1129px; top: 480.94px; font-size: 12px; color: rgb(0, 0, 0); --fw: 27px; transform-origin: 0px 50%; transform: scaleX(0.9);">100.0</div>
<div class="t" style="left: 1129px; top: 506.84px; font-size: 12px; color: rgb(0, 0, 0); --fw: 20.7px; transform-origin: 0px 50%; transform: scaleX(0.9);">0.00</div>
<div class="t" style="left: 1177px; top: 454.64px; font-size: 12px; color: rgb(0, 0, 0); --fw: 12.5px; transform-origin: 0px 50%; transform: scaleX(0.833333);">Hz</div>
<div class="t" style="left: 1177px; top: 480.94px; font-size: 12px; color: rgb(0, 0, 0); --fw: 8px; transform-origin: 0px 50%; transform: scaleX(0.727273);">%</div>
<div class="t" style="left: 883.4px; top: 534.84px; font-size: 12px; color: rgb(0, 0, 0); --fw: 44.3px; transform-origin: 0px 50%; transform: scaleX(0.868627);">Direction:</div>
<div class="rb" style="left:949.7px;top:534.2px"></div>
<div class="t" style="left: 966.5px; top: 534.84px; font-size: 12px; color: rgb(0, 0, 0); --fw: 41.4px; transform-origin: 0px 50%; transform: scaleX(0.880851);">Negative</div>
<div class="rb" style="left:1018.5999999999999px;top:534.2px"></div>
<div class="t" style="left: 1034.8px; top: 534.84px; font-size: 12px; color: rgb(0, 0, 0); --fw: 42.1px; transform-origin: 0px 50%; transform: scaleX(0.859184);">Centered</div>
<div class="rb" style="left:1087.8px;top:534.2px"></div>
<div class="t" style="left: 1104.4px; top: 534.84px; font-size: 12px; color: rgb(0, 0, 0); --fw: 35.6px; transform-origin: 0px 50%; transform: scaleX(0.847619);">Positive</div>
<div class="a" style="left:1022.1px;top:537.7px;width:6px;height:6px;border-radius:50%;background:#222"></div>
<div class="t" style="left: 883.4px; top: 560.04px; font-size: 12px; color: rgb(0, 0, 0); --fw: 57.8px; transform-origin: 0px 50%; transform: scaleX(0.862687);">Phase reset:</div>
<div class="a" style="left:950.4px;top:555.5px;width:224px;height:20px;background:#e1e1e1;border:1px solid #adadad;"></div>
<div class="t" style="left: 953.6px; top: 560.04px; font-size: 12px; color: rgb(0, 0, 0); --fw: 165.3px; transform-origin: 0px 50%; transform: scaleX(0.88871);">On seek/loop (deterministic output)</div>
<svg style="left:1160px;top:562px" width="10" height="8"><path d="M1 2 L5 6 L9 2" stroke="#333" stroke-width="1.1" fill="none"></path></svg>
<div class="a" style="left:937.5px;top:587.1px;width:257.3px;height:9.4px;background:#e6e6e6;border:1px solid #bcbcbc;"></div>
<div class="a" style="left:938.5px;top:588.1px;width:82.3px;height:7.4px;background:#06b025"></div>
<div class="cb" style="left:878px;top:614.4px"></div>
<div class="t" style="left: 894.3px; top: 614.44px; font-size: 12px; color: rgb(0, 0, 0); --fw: 146.1px; transform-origin: 0px 50%; transform: scaleX(0.864497);">Link from MIDI or FX parameter</div>
<svg style="left:0;top:0" width="1578" height="778"><g stroke="#7a4c55" stroke-width="7" fill="none" stroke-linecap="butt" stroke-linejoin="miter">
 <path d="M1147.5 206 L1077 448"></path>
 <path d="M1066 426 L1077 448 L1100 436"></path>
</g></svg>



</body></html>
